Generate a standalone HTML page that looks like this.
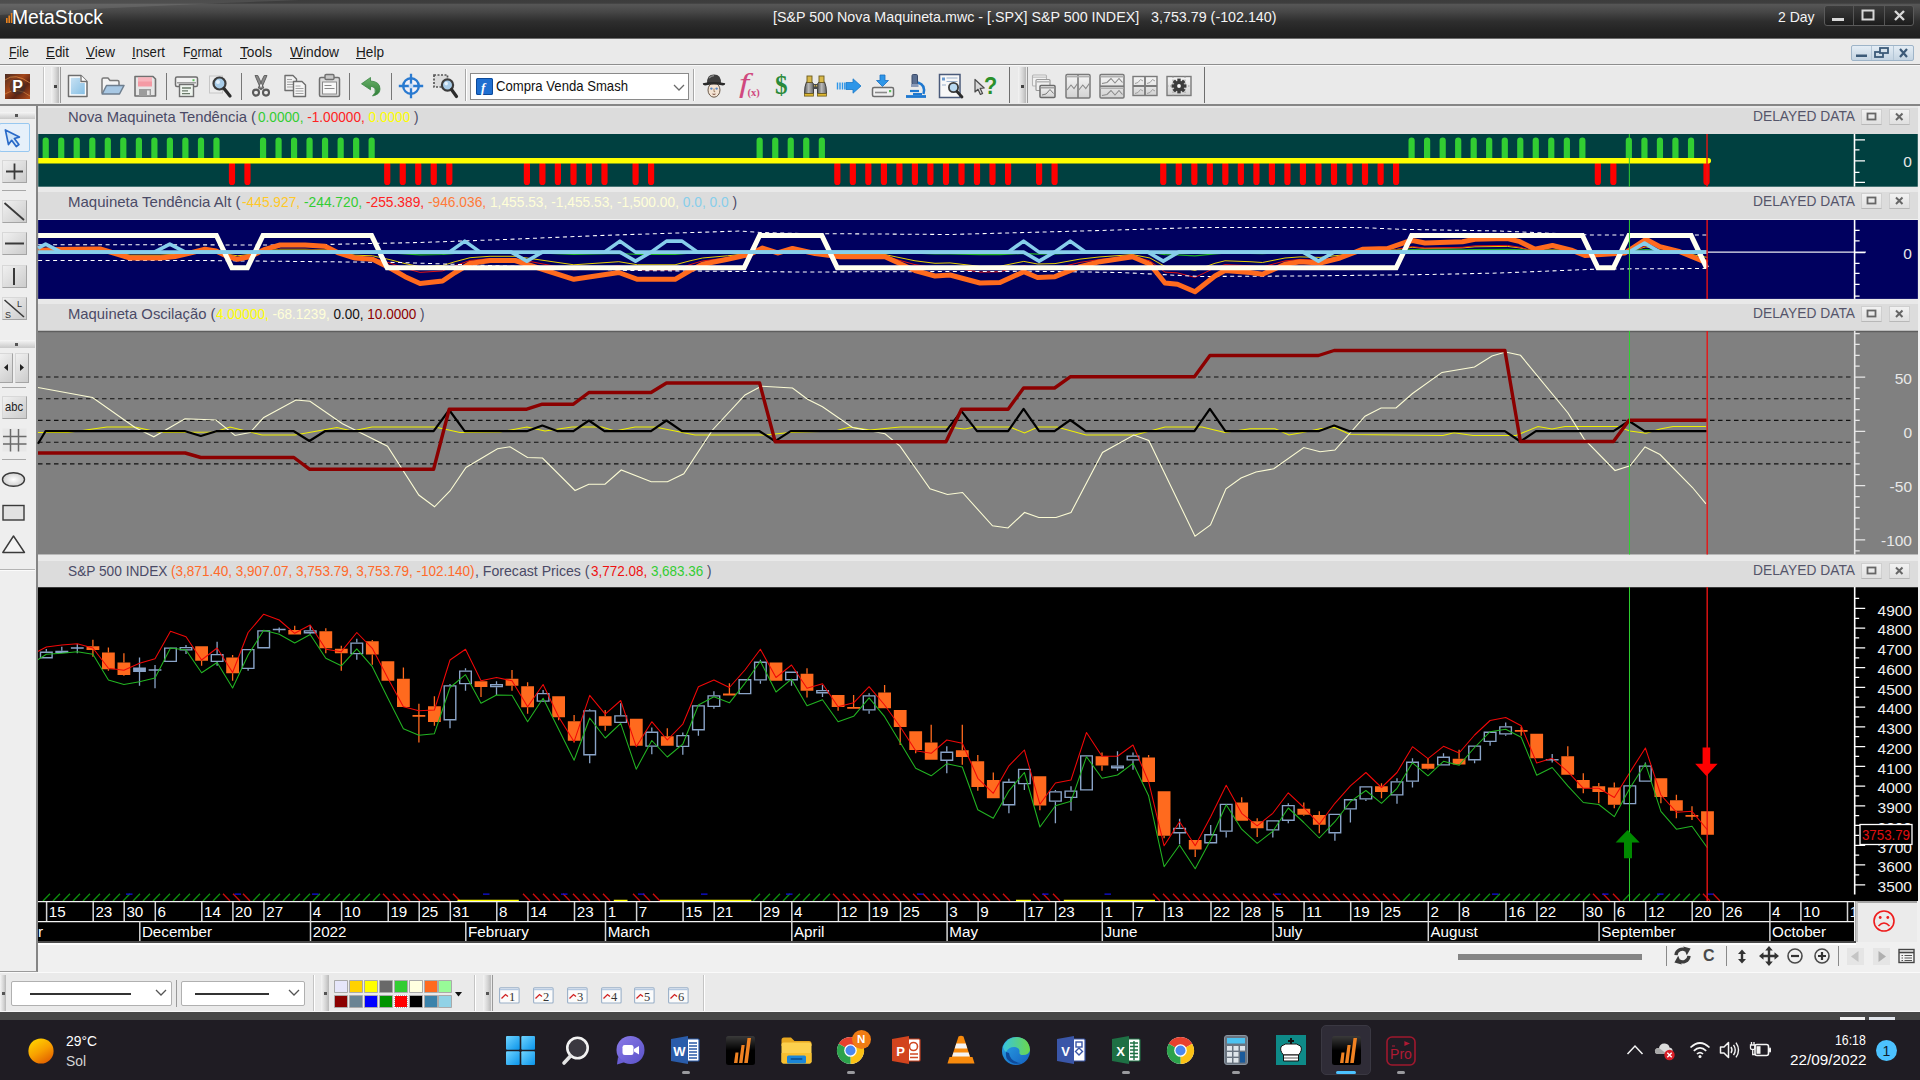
<!DOCTYPE html>
<html lang="pt"><head><meta charset="utf-8"><title>MetaStock - S&amp;P 500 Nova Maquineta</title>
<style>
html,body{margin:0;padding:0}
body{width:1920px;height:1080px;overflow:hidden;background:#f0f0f0;font-family:"Liberation Sans",sans-serif;position:relative}
.t{position:absolute;white-space:pre;line-height:1;transform-origin:0 50%;display:block}
.a{position:absolute}
svg{position:absolute;overflow:visible}
#titlebar{left:0;top:0;width:1920px;height:38px;background:linear-gradient(#3c3c3c 0,#3e3e3e 8%,#565656 12%,#464646 32%,#2e2e2e 56%,#242424 80%,#1f1f1f 100%)}
#menubar{left:0;top:38px;width:1920px;height:27px;background:#eaeaea;border-top:1px solid #6c6c6c;border-bottom:1px solid #8e8e8e;box-sizing:border-box}
#toolbar{left:0;top:65px;width:1920px;height:41px;background:#eaeaea;box-sizing:border-box;border-top:1px solid #f8f8f8;border-bottom:2px solid #868686}
#lefttools{left:0;top:106px;width:35.6px;height:865px;background:#eeeeee;border-right:2px solid #858585;border-bottom:1px solid #9a9a9a}
.phead{left:38px;width:1880px;background:#dcdcdc;box-sizing:border-box;border-top:6px solid #e9e9e9}
.btn3{position:absolute;box-sizing:border-box;background:linear-gradient(135deg,#f0f0f0,#cccccc);border:1px solid #d8d8d8;border-right-color:#a4a4a4;border-bottom-color:#a4a4a4}
.hb{position:absolute;box-sizing:border-box;width:21px;height:16px;background:linear-gradient(#f2f2f2,#e0e0e0);border:1px solid #cfcfcf;border-bottom-color:#b8b8b8}
.sep{position:absolute;width:1px;background:#a8a8a8;border-right:1px solid #fff}
.grip{position:absolute;width:8px;background:linear-gradient(90deg,#f4f4f4,#d4d4d4 60%,#b8b8b8)}
#taskbar{left:0;top:1020px;width:1920px;height:60px;background:#1f1c23}
#bottombar{left:0;top:972px;width:1920px;height:40.3px;background:#eaeaea;border-top:1px solid #fafafa;border-bottom:1px solid #f6f6f6;box-sizing:border-box}
.combo{position:absolute;box-sizing:border-box;background:#fff;border:1px solid #8a8a8a}
</style></head>
<body>
<div id="titlebar" class="a"><svg style="left:0;top:0" width="400" height="38"><path d="M0,0 H300 C200,4 90,8 0,15 Z" fill="#fff" opacity="0.09"/></svg><svg style="left:5px;top:10px" width="8" height="14"><rect x="1" y="8" width="1.6" height="5" fill="#e8821e"/><rect x="3.4" y="5.5" width="1.6" height="7.5" fill="#e8821e"/><rect x="5.8" y="3" width="1.6" height="10" fill="#e8821e"/></svg><span class="t" style="left:12.0px;top:6.9px;font-size:20px;color:#fff;transform:scaleX(0.9632);">MetaStock</span><span class="t" style="left:772.5px;top:9.3px;font-size:15px;color:#f4f4f4;transform:scaleX(0.9520);">[S&amp;P 500 Nova Maquineta.mwc - [.SPX] S&amp;P 500 INDEX]   3,753.79 (-102.140)</span><span class="t" style="left:1777.5px;top:9.3px;font-size:15px;color:#f4f4f4;transform:scaleX(0.9315);">2 Day</span><div class="a" style="left:1824px;top:5px;width:90px;height:21px;box-sizing:border-box;border:1px solid #5a5a5a;border-radius:3px;background:linear-gradient(#3c3c3c,#1c1c1c)"></div><div class="a" style="left:1853px;top:6px;width:1px;height:19px;background:#555"></div><div class="a" style="left:1884px;top:6px;width:1px;height:19px;background:#555"></div><svg style="left:1824px;top:5px" width="90" height="21"><rect x="8" y="13" width="12" height="3" fill="#d8d8d8"/><rect x="38.5" y="5.5" width="11" height="9" fill="none" stroke="#d8d8d8" stroke-width="2"/><path d="M71,6 l9,9 M80,6 l-9,9" stroke="#d8d8d8" stroke-width="2.4"/></svg></div>
<div id="menubar" class="a"><span class="t" style="left:9px;top:4.5px;font-size:15px;color:#1a1a1a;transform:scaleX(0.8275)"><u>F</u>ile</span><span class="t" style="left:46px;top:4.5px;font-size:15px;color:#1a1a1a;transform:scaleX(0.8899)"><u>E</u>dit</span><span class="t" style="left:86px;top:4.5px;font-size:15px;color:#1a1a1a;transform:scaleX(0.8995)"><u>V</u>iew</span><span class="t" style="left:132px;top:4.5px;font-size:15px;color:#1a1a1a;transform:scaleX(0.8797)"><u>I</u>nsert</span><span class="t" style="left:183px;top:4.5px;font-size:15px;color:#1a1a1a;transform:scaleX(0.8210)">F<u>o</u>rmat</span><span class="t" style="left:240px;top:4.5px;font-size:15px;color:#1a1a1a;transform:scaleX(0.9139)"><u>T</u>ools</span><span class="t" style="left:290px;top:4.5px;font-size:15px;color:#1a1a1a;transform:scaleX(0.9185)"><u>W</u>indow</span><span class="t" style="left:356px;top:4.5px;font-size:15px;color:#1a1a1a;transform:scaleX(0.9077)"><u>H</u>elp</span><div class="a" style="left:1851px;top:5.5px;width:63px;height:16px;box-sizing:border-box;border:1px solid #9eb4c8;border-radius:2px;background:linear-gradient(#e4edf5,#c4d4e2)"></div><svg style="left:1851px;top:5.5px" width="63" height="16"><rect x="5" y="9.5" width="11" height="2.5" fill="#3c5a78"/><rect x="24" y="7" width="8" height="5" fill="none" stroke="#3c5a78" stroke-width="1.8"/><rect x="29" y="3" width="8" height="5" fill="#d4e0ea" stroke="#3c5a78" stroke-width="1.8"/><path d="M49,4 l7,8 M56,4 l-7,8" stroke="#3c5a78" stroke-width="2.2"/><path d="M20.5,1 v14 M42.5,1 v14" stroke="#b4c6d6" stroke-width="1"/></svg></div>
<div id="toolbar" class="a"></div>
<svg style="left:5px;top:73.5px" width="25" height="25" viewBox="0 0 25 25" ><defs><linearGradient id="pg" x1="0" y1="0" x2="1" y2="1"><stop offset="0" stop-color="#4a2c22"/><stop offset="0.4" stop-color="#a4461a"/><stop offset="0.65" stop-color="#5c2414"/><stop offset="1" stop-color="#b8501c"/></linearGradient></defs><rect width="25" height="25" fill="url(#pg)"/><path d="M0,6 Q10,-2 25,9" stroke="#f0a050" stroke-width="1" fill="none" opacity="0.6"/><path d="M0,20 Q12,12 25,22" stroke="#f0a050" stroke-width="1" fill="none" opacity="0.5"/><circle cx="12.5" cy="12.5" r="8" fill="#3a3030" opacity="0.55"/><text x="12.5" y="18.2" font-size="16" font-weight="bold" fill="#fff" text-anchor="middle" font-family="Liberation Sans, sans-serif">P</text></svg><div class="sep" style="left:43px;top:67px;height:36px;background:#c4c4c4"></div><div class="grip" style="left:51px;top:67px;height:36px"></div><div class="a" style="left:60px;top:67px;width:1px;height:36px;background:#9a9a9a"></div><div class="a" style="left:54px;top:85px;width:3px;height:3px;background:#444"></div><svg style="left:66px;top:74px" width="24" height="24" viewBox="0 0 24 24" ><defs><linearGradient id="nb" x1="0" y1="0" x2="1" y2="1"><stop offset="0" stop-color="#c8e2f4"/><stop offset="1" stop-color="#86bfe4"/></linearGradient></defs><path d="M2.5,1.5 H15 L21,7.5 V22.5 H2.5z" fill="#fff" stroke="#6e6e6e" stroke-width="1.5" stroke-linejoin="round"/><path d="M4.8,3.8 H14 L14,9 H18.8 V20.2 H4.8z" fill="url(#nb)"/><path d="M15,1.5 V7.5 H21" fill="#fff" stroke="#6e6e6e" stroke-width="1.3"/></svg><svg style="left:100px;top:74px" width="26" height="24" viewBox="0 0 26 24" ><path d="M2,19.5 V5.5 Q2,4 3.5,4 H8 L10,6.5 H17.5 Q19,6.5 19,8 V11" fill="#f4f4f4" stroke="#7a7a7a" stroke-width="1.5" stroke-linejoin="round"/><path d="M2.2,20 L6.5,11.5 H24 L19.5,20z" fill="#a8c8e4" stroke="#6e7e8e" stroke-width="1.5" stroke-linejoin="round"/></svg><svg style="left:133px;top:74px" width="24" height="24" viewBox="0 0 24 24" ><path d="M2,2.5 H20 L22.5,5 V22 H2z" fill="#e6e6e6" stroke="#707070" stroke-width="1.6" stroke-linejoin="round"/><rect x="5" y="3.5" width="14" height="9" fill="#f49aa4"/><rect x="5" y="3.5" width="14" height="4" fill="#f8b4bc"/><rect x="6" y="15" width="12" height="7" fill="#9c9c9c"/><rect x="14" y="16.5" width="2.6" height="4.5" fill="#e8e8e8"/></svg><div class="a" style="left:165.5px;top:72.5px;width:1px;height:27px;background:#777"></div><svg style="left:174px;top:74px" width="25" height="24" viewBox="0 0 25 24" ><rect x="1.5" y="3" width="22" height="9.5" rx="1.5" fill="#f2f2f2" stroke="#6e6e6e" stroke-width="1.5"/><rect x="18.5" y="5.2" width="2" height="2" fill="#5cc05c"/><path d="M3,8.8 H22" stroke="#8a8a8a" stroke-width="1.2"/><rect x="5.5" y="10.5" width="14" height="12" fill="#eef4ee" stroke="#6e6e6e" stroke-width="1.4"/><path d="M8,14 H17 M8,16.8 H14 M8,19.6 H16" stroke="#6a7a6a" stroke-width="1.3"/></svg><svg style="left:207px;top:73px" width="26" height="26" viewBox="0 0 26 26" ><rect x="2.5" y="3" width="13" height="17" fill="#ececec" stroke="#c6c6c6" stroke-width="1"/><circle cx="12.5" cy="10.5" r="6" fill="#a8cce8" stroke="#3c3c3c" stroke-width="2.2"/><circle cx="11" cy="9" r="2" fill="#e4f0fa"/><path d="M17,15.5 L23,23" stroke="#2c2c2c" stroke-width="3.2" stroke-linecap="round"/></svg><div class="a" style="left:240.5px;top:72.5px;width:1px;height:27px;background:#777"></div><svg style="left:250px;top:74px" width="22" height="24" viewBox="0 0 22 24" ><path d="M5,1.5 L7.8,1.5 L13.8,14 L11,15.5z M17,1.5 L14.2,1.5 L8.2,14 L11,15.5z" fill="#8a8a8a" stroke="#5a5a5a" stroke-width="0.9" stroke-linejoin="round"/><circle cx="6" cy="18.6" r="3" fill="none" stroke="#5a5a5a" stroke-width="2.1"/><circle cx="16" cy="18.6" r="3" fill="none" stroke="#5a5a5a" stroke-width="2.1"/></svg><svg style="left:283px;top:74px" width="24" height="24" viewBox="0 0 24 24" ><path d="M2,1.5 H10 L13.5,5 V16.5 H2z" fill="#f2f2f2" stroke="#6e6e6e" stroke-width="1.4" stroke-linejoin="round"/><path d="M4,5.5 h5 M4,8 h7 M4,10.5 h7 M4,13 h7" stroke="#a4a4a4" stroke-width="1"/><path d="M10.5,7.5 H19 L22.5,11 V22.5 H10.5z" fill="#f6f6f6" stroke="#6e6e6e" stroke-width="1.4" stroke-linejoin="round"/><path d="M12.5,12 h5 M12.5,14.5 h8 M12.5,17 h8 M12.5,19.5 h8" stroke="#a4a4a4" stroke-width="1"/></svg><svg style="left:318px;top:73px" width="23" height="25" viewBox="0 0 23 25" ><rect x="1.5" y="4.5" width="20" height="19" rx="1.5" fill="#dcdcdc" stroke="#707070" stroke-width="1.5"/><rect x="7" y="1.5" width="9" height="5" rx="1.2" fill="#c8c8c8" stroke="#707070" stroke-width="1.4"/><rect x="4.5" y="9" width="14" height="12" fill="#f8f8f8" stroke="#8a8a8a" stroke-width="1"/><path d="M6.5,12.5 h7 M6.5,15.5 h10" stroke="#8a8a8a" stroke-width="1.2"/></svg><div class="a" style="left:349px;top:72.5px;width:1px;height:27px;background:#777"></div><svg style="left:360px;top:75px" width="22" height="22" viewBox="0 0 22 22" ><defs><linearGradient id="ug" x1="0" y1="0" x2="0" y2="1"><stop offset="0" stop-color="#6ab06a"/><stop offset="1" stop-color="#2e7e36"/></linearGradient></defs><path d="M1.5,8.8 L10.5,2.5 V6 Q20,6.5 20,14 Q20,19.5 12.5,21 Q16.5,17.5 15,13.8 Q13.5,11.2 10.5,11.4 V14.8z" fill="url(#ug)" stroke="#3a8644" stroke-width="0.8" stroke-linejoin="round"/></svg><div class="a" style="left:390.5px;top:72.5px;width:1px;height:27px;background:#777"></div><svg style="left:398px;top:73px" width="26" height="26" viewBox="0 0 26 26" ><circle cx="13" cy="13" r="7.8" fill="#f4f0f6" stroke="#2a7ad0" stroke-width="2.4"/><path d="M13,0.8 V25.2 M0.8,13 H25.2" stroke="#2a7ad0" stroke-width="2.3"/><circle cx="13" cy="13" r="2.4" fill="#d8e6f8" opacity="0.9"/></svg><svg style="left:432px;top:73px" width="26" height="26" viewBox="0 0 26 26" ><rect x="2" y="2" width="13.5" height="12" fill="#dcdcdc" stroke="#555" stroke-width="1.7" stroke-dasharray="2 1.5"/><circle cx="15.5" cy="12" r="5.6" fill="#a8cce8" stroke="#3c3c3c" stroke-width="2.2"/><circle cx="14.2" cy="10.6" r="1.8" fill="#e4f0fa"/><path d="M19.5,16.5 L24.5,23.5" stroke="#2c2c2c" stroke-width="3.2" stroke-linecap="round"/></svg><div class="sep" style="left:465px;top:69px;height:32px"></div><div class="sep" style="left:693px;top:69px;height:32px"></div><svg style="left:702px;top:73px" width="24" height="26" viewBox="0 0 24 26" ><ellipse cx="12" cy="17" rx="6" ry="7.2" fill="#f4e4d4" stroke="#6a5a4a" stroke-width="1"/><path d="M5,10.8 Q4.5,1.5 12,1.5 Q19.5,1.5 19,10.8z" fill="#3e3e3e"/><path d="M7,5 Q9,2.8 12,2.6" stroke="#8a8a8a" stroke-width="1.3" fill="none"/><path d="M0.8,10.2 Q12,8 23.2,10.2 Q23.6,12 21,12.6 Q12,10.6 3,12.6 Q0.4,12 0.8,10.2z" fill="#2a2a2a"/><circle cx="9.4" cy="15.6" r="1.2" fill="#5a8ac8"/><circle cx="14.6" cy="15.6" r="1.2" fill="#5a8ac8"/><path d="M12,15.5 v3.2 h1.2" stroke="#8a6a4a" stroke-width="0.8" fill="none"/><path d="M10.5,21 q1.5,0.8 3,0" stroke="#6a3a2a" stroke-width="0.9" fill="none"/></svg><span class="t" style="left:738.5px;top:69.5px;font-size:27px;color:#d0487e;font-family:'Liberation Serif',serif;font-style:italic;transform:scaleX(1.35)">f</span><span class="t" style="left:747.5px;top:87.5px;font-size:10.5px;font-weight:bold;color:#d0487e;font-family:'Liberation Serif',serif">(x)</span><span class="t" style="left:774.5px;top:71px;font-size:28px;color:#2a8a3a;font-family:'Liberation Serif',serif;font-weight:bold;transform:scaleX(0.9)">$</span><svg style="left:803px;top:74px" width="25" height="24" viewBox="0 0 25 24" ><defs><linearGradient id="bn" x1="0" y1="0" x2="1" y2="0"><stop offset="0" stop-color="#5a5a5a"/><stop offset="0.45" stop-color="#b8b8b8"/><stop offset="1" stop-color="#6a6a6a"/></linearGradient></defs><path d="M3.5,8 Q1.5,12 1.5,19.5 H10.5 V10 L9,8z" fill="url(#bn)" stroke="#3e3e3e" stroke-width="1"/><path d="M21.5,8 Q23.5,12 23.5,19.5 H14.5 V10 L16,8z" fill="url(#bn)" stroke="#3e3e3e" stroke-width="1"/><rect x="4" y="2" width="5" height="6.5" fill="#d8b848" stroke="#6a5a20" stroke-width="0.9"/><rect x="16" y="2" width="5" height="6.5" fill="#d8b848" stroke="#6a5a20" stroke-width="0.9"/><rect x="9.8" y="10" width="5.4" height="5" fill="#4a4a4a"/><rect x="11" y="11.2" width="1.2" height="1.2" fill="#e8c850"/><rect x="13" y="11.2" width="1.2" height="1.2" fill="#e8c850"/><rect x="1.5" y="19.5" width="9" height="2.6" fill="#e0b830" stroke="#6a5a20" stroke-width="0.8"/><rect x="14.5" y="19.5" width="9" height="2.6" fill="#e0b830" stroke="#6a5a20" stroke-width="0.8"/></svg><svg style="left:836px;top:78px" width="26" height="16" viewBox="0 0 26 16" ><path d="M10,4.5 H17 V0.8 L25,8 L17,15.2 V11.5 H10z" fill="#2e96e8" stroke="#1a78c8" stroke-width="0.8"/><path d="M1.5,4.5 V11.5 M4,4.5 V11.5 M6.5,4.5 V11.5 M8.8,4.5 V11.5" stroke="#2e96e8" stroke-width="1.4"/></svg><svg style="left:871px;top:74px" width="24" height="25" viewBox="0 0 24 25" ><path d="M9,1 h5 v5.5 h3.5 l-6,6 l-6,-6 h3.5z" fill="#2e96e8" stroke="#1a70c0" stroke-width="0.8"/><rect x="1.5" y="13.5" width="21" height="9" rx="1.5" fill="#f0f0f0" stroke="#6e6e6e" stroke-width="1.5"/><path d="M4,18.5 h12" stroke="#8a8a8a" stroke-width="1.6"/><rect x="18" y="16" width="2.2" height="2.2" fill="#5cc05c"/></svg><svg style="left:904px;top:73px" width="24" height="26" viewBox="0 0 24 26" ><rect x="8" y="1.5" width="5.5" height="10" rx="1.2" fill="#5a6e90" stroke="#3a4a6a" stroke-width="1"/><rect x="7" y="11" width="7.5" height="3" fill="#8a9ab8"/><path d="M14,9.5 Q22,12 19.5,21" fill="none" stroke="#1e78d0" stroke-width="2.4"/><path d="M6,18 h9" stroke="#1e78d0" stroke-width="2.2"/><path d="M2,23.5 H22" stroke="#1e78d0" stroke-width="2.8"/><path d="M9,21 h9" stroke="#1e78d0" stroke-width="2"/></svg><svg style="left:938px;top:73px" width="26" height="26" viewBox="0 0 26 26" ><rect x="1.5" y="1.5" width="20.5" height="23" fill="#f8f8f8" stroke="#4a5a7a" stroke-width="1.5"/><rect x="4" y="4.5" width="3" height="3" fill="#6a9ad0"/><path d="M8.5,5 h11 M8.5,8.5 h11 M4,12 h4" stroke="#9ab0cc" stroke-width="1.1"/><circle cx="15.5" cy="14.5" r="4.6" fill="#b8d8f0" stroke="#3c3c3c" stroke-width="1.8"/><path d="M19,18.5 L24,24" stroke="#2c2c2c" stroke-width="2.8" stroke-linecap="round"/></svg><svg style="left:973px;top:75px" width="26" height="22" viewBox="0 0 26 22" ><path d="M2,4.5 L2,17 L5,14.3 L7.4,19.5 L9.6,18.4 L7.2,13.4 L11.2,13z" fill="#d8d8d8" stroke="#4a4a4a" stroke-width="1.2" stroke-linejoin="round"/></svg><span class="t" style="left:984px;top:74px;font-size:24px;color:#2a902a;font-weight:bold;transform:scaleX(0.9)">?</span><div class="a" style="left:1009px;top:67px;width:1px;height:36px;background:#6e6e6e"></div><div class="grip" style="left:1018px;top:67px;height:36px"></div><div class="a" style="left:1027px;top:67px;width:1px;height:36px;background:#9a9a9a"></div><div class="a" style="left:1021px;top:85px;width:3px;height:3px;background:#444"></div><svg style="left:1031px;top:73px" width="26" height="26" viewBox="0 0 26 26" ><defs><linearGradient id="cg" x1="0" y1="0" x2="0" y2="1"><stop offset="0" stop-color="#f6f6f6"/><stop offset="1" stop-color="#d2d2d2"/></linearGradient></defs><rect x="1.5" y="2" width="14" height="11" rx="1" fill="#f2f2f2" stroke="#b4b4b4" stroke-width="1.1"/><path d="M2,4.2 h13" stroke="#c8c8c8" stroke-width="1.4"/><rect x="5" y="6.5" width="14" height="11" rx="1" fill="#f0f0f0" stroke="#9a9a9a" stroke-width="1.2"/><path d="M5.5,8.8 h13" stroke="#b4b4b4" stroke-width="1.4"/><rect x="9" y="12.5" width="15" height="12" rx="1" fill="url(#cg)" stroke="#6a6a6a" stroke-width="1.5"/><path d="M9.5,14.8 h14" stroke="#9a9a9a" stroke-width="1.4"/><path d="M11,22 l4,-1 l4,-4.5 l3.5,4" stroke="#7a7a7a" stroke-width="1" fill="none"/></svg><svg style="left:1065px;top:73px" width="26" height="26" viewBox="0 0 26 26" ><rect x="1" y="1.5" width="24" height="23.5" rx="1.2" fill="url(#cg)" stroke="#7a7a7a" stroke-width="1.5"/><path d="M13,1.5 V25" stroke="#7a7a7a" stroke-width="1.6"/><path d="M1.5,3.6 h23" stroke="#b0b0b0" stroke-width="1.6"/><path d="M2,17 l4,-5 l3,3.5 l3.5,-5 M13.8,17 l4,-5 l3,3.5 l3.5,-5" stroke="#8a8a8a" stroke-width="1.1" fill="none"/></svg><svg style="left:1098.5px;top:73px" width="26" height="26" viewBox="0 0 26 26" ><rect x="1" y="1.5" width="24" height="23.5" rx="1.2" fill="url(#cg)" stroke="#7a7a7a" stroke-width="1.5"/><path d="M1,13.2 H25" stroke="#7a7a7a" stroke-width="1.6"/><path d="M1.5,3.6 h23 M1.5,15.2 h23" stroke="#b0b0b0" stroke-width="1.6"/><path d="M3,10.5 l5,-1 l4,-4 l4,4.5 l4,-4.5 l3.5,4 M3,22.5 l5,-1 l4,-4 l4,4.5 l4,-4.5 l3.5,4" stroke="#8a8a8a" stroke-width="1.1" fill="none"/></svg><svg style="left:1132px;top:75px" width="26" height="22" viewBox="0 0 26 22" ><rect x="1" y="1.5" width="24" height="19" fill="url(#cg)" stroke="#7a7a7a" stroke-width="1.4"/><path d="M13,1.5 V20.5 M1,11 H25" stroke="#7a7a7a" stroke-width="1.8"/><path d="M3,8.5 l3,-1 l2.5,-3 l2.5,1.5 M15,8.5 l3,-1 l2.5,-3 l2.5,1.5 M3,18.5 l3,-1 l2.5,-3 l2.5,1.5 M15,18.5 l3,-1 l2.5,-3 l2.5,1.5" stroke="#a0a0a0" stroke-width="1" fill="none"/></svg><svg style="left:1166px;top:75px" width="26" height="22" viewBox="0 0 26 22" ><rect x="1" y="1.5" width="24" height="19" fill="url(#cg)" stroke="#7a7a7a" stroke-width="1.4"/><path d="M1,11 H25 M7,1.5 V20.5 M19,1.5 V20.5" stroke="#9a9a9a" stroke-width="1" stroke-dasharray="1.5 1.5"/><rect x="11.3" y="3.6" width="3.4" height="4" fill="#3c3c3c" transform="rotate(0 13 11)"/><rect x="11.3" y="3.6" width="3.4" height="4" fill="#3c3c3c" transform="rotate(45 13 11)"/><rect x="11.3" y="3.6" width="3.4" height="4" fill="#3c3c3c" transform="rotate(90 13 11)"/><rect x="11.3" y="3.6" width="3.4" height="4" fill="#3c3c3c" transform="rotate(135 13 11)"/><rect x="11.3" y="3.6" width="3.4" height="4" fill="#3c3c3c" transform="rotate(180 13 11)"/><rect x="11.3" y="3.6" width="3.4" height="4" fill="#3c3c3c" transform="rotate(225 13 11)"/><rect x="11.3" y="3.6" width="3.4" height="4" fill="#3c3c3c" transform="rotate(270 13 11)"/><rect x="11.3" y="3.6" width="3.4" height="4" fill="#3c3c3c" transform="rotate(315 13 11)"/><circle cx="13" cy="11" r="5.2" fill="#3c3c3c"/><circle cx="13" cy="11" r="1.9" fill="#f8f8f8"/></svg><div class="a" style="left:1204.3px;top:67px;width:1px;height:36px;background:#6e6e6e"></div><div class="combo" style="left:470px;top:73px;width:219px;height:27px"></div><svg style="left:476px;top:78px" width="17" height="17"><rect x="0" y="0" width="17" height="17" rx="1.5" fill="#1f6fd0"/><rect x="0.5" y="0.5" width="16" height="16" rx="1.5" fill="none" stroke="#0d4a9a"/></svg><span class="t" style="left:481.0px;top:80.5px;font-size:13px;color:#fff;font-weight:bold;font-style:italic;font-family:'Liberation Serif',serif;">f</span><span class="t" style="left:496.0px;top:78.3px;font-size:15px;color:#111;transform:scaleX(0.8747);">Compra Venda Smash</span><svg style="left:672.5px;top:83.5px" width="12" height="8"><path d="M1,1 L6,6 L11,1" fill="none" stroke="#6a6a6a" stroke-width="1.3"/></svg><div id="lefttools" class="a"></div>
<div class="a" style="left:0;top:112px;width:35px;height:7px;background:linear-gradient(#f6f6f6,#c8c8c8)"></div><div class="a" style="left:15px;top:114px;width:3px;height:3px;background:#555"></div><div class="a" style="left:-1px;top:123px;width:31px;height:29px;box-sizing:border-box;border:1px solid #98c8f0;border-radius:2px;background:#e6f0fa"></div><svg style="left:5px;top:127px" width="18" height="22" viewBox="0 0 18 22" ><path d="M2,1.5 L2,16.5 L6,13 L9.2,20 L12.2,18.6 L9,11.8 L14.2,11.4z" fill="#cfe4f8" stroke="#2a6ac8" stroke-width="1.7" stroke-linejoin="round" transform="rotate(-12 8 10)"/></svg><div class="btn3" style="left:2px;top:160px;width:25px;height:23px"></div><svg style="left:2px;top:160px" width="25" height="23" viewBox="0 0 25 23" ><path d="M12.5,3.5 V19.5 M4,11.5 H21" stroke="#3a3a3a" stroke-width="1.8"/></svg><div class="a" style="left:2px;top:190px;width:24px;height:1px;background:#a8a8a8"></div><div class="btn3" style="left:2px;top:200px;width:25px;height:23px"></div><svg style="left:2px;top:200px" width="25" height="23" viewBox="0 0 25 23" ><path d="M2.5,3 L22,20" stroke="#3a3a3a" stroke-width="1.8"/></svg><div class="btn3" style="left:2px;top:232px;width:25px;height:23px"></div><svg style="left:2px;top:232px" width="25" height="23" viewBox="0 0 25 23" ><path d="M3,11.5 H22" stroke="#3a3a3a" stroke-width="2"/></svg><div class="btn3" style="left:2px;top:265px;width:25px;height:23px"></div><svg style="left:2px;top:265px" width="25" height="23" viewBox="0 0 25 23" ><path d="M12,3 V20" stroke="#3a3a3a" stroke-width="2"/></svg><div class="btn3" style="left:2px;top:297px;width:25px;height:23px"></div><svg style="left:2px;top:297px" width="25" height="23" viewBox="0 0 25 23" ><path d="M2.5,3 L22,20" stroke="#3a3a3a" stroke-width="1.6"/><text x="15" y="9.5" font-size="9" fill="#333" font-family="Liberation Sans, sans-serif">L</text><text x="3" y="20.5" font-size="9" fill="#333" font-family="Liberation Sans, sans-serif">S</text></svg><div class="a" style="left:0;top:340px;width:35px;height:8px;background:linear-gradient(#f6f6f6,#c8c8c8)"></div><div class="a" style="left:15px;top:342.5px;width:3px;height:3px;background:#555"></div><div class="btn3" style="left:-1px;top:353px;width:14px;height:30px"></div><div class="btn3" style="left:15px;top:353px;width:14px;height:30px"></div><svg style="left:0px;top:353px" width="30" height="30" viewBox="0 0 30 30" ><path d="M8,11 L4,14.5 L8,18z M20,11 L24,14.5 L20,18z" fill="#222"/></svg><div class="a" style="left:2px;top:387px;width:24px;height:1px;background:#a8a8a8"></div><div class="btn3" style="left:2px;top:396px;width:25px;height:23px"></div><span class="t" style="left:4.5px;top:400px;font-size:13px;color:#222;transform:scaleX(0.86)">abc</span><svg style="left:2px;top:428px" width="25" height="24" viewBox="0 0 25 24" ><rect x="0.5" y="0.5" width="24" height="23" fill="#e8e8e8"/><path d="M8.5,1 V23.5 M16.5,1 V23.5 M1,8.5 H24.5 M1,16 H24.5" stroke="#6a6a6a" stroke-width="1.5"/></svg><div class="a" style="left:2px;top:459px;width:24px;height:1px;background:#a8a8a8"></div><svg style="left:1px;top:470px" width="27" height="20" viewBox="0 0 27 20" ><defs><radialGradient id="eg"><stop offset="0" stop-color="#fff"/><stop offset="1" stop-color="#d0d0d0"/></radialGradient></defs><ellipse cx="12.5" cy="9.5" rx="11" ry="6.8" fill="url(#eg)" stroke="#3a3a3a" stroke-width="1.4"/></svg><svg style="left:1px;top:503px" width="27" height="20" viewBox="0 0 27 20" ><rect x="2" y="2.5" width="21" height="14.5" fill="#e2e2e2" stroke="#3a3a3a" stroke-width="1.4"/></svg><svg style="left:1px;top:533px" width="27" height="22" viewBox="0 0 27 22" ><path d="M12.5,3 L23.5,19.5 H1.8z" fill="#f4f4f4" stroke="#3a3a3a" stroke-width="1.4" stroke-linejoin="round"/></svg><div class="a" style="left:0;top:569px;width:35px;height:1px;background:#b4b4b4"></div><div class="a" style="left:0;top:570px;width:35px;height:1px;background:#fbfbfb"></div><div class="a phead" style="top:106px;height:27.5px;border-top-width:2px"></div><span class="t" style="left:68.0px;top:109.3px;font-size:15px;transform:scaleX(0.9860);"><span style="color:#4a4a66">Nova Maquineta Tendência (</span></span><span class="t" style="left:257.5px;top:109.3px;font-size:15px;transform:scaleX(0.9079);"><span style="color:#32cd32">0.0000,</span><span style="color:#ff2222"> -1.00000,</span><span style="color:#ffff00"> 0.0000</span><span style="color:#4a4a66"> )</span></span><span class="t" style="left:1753.0px;top:109.3px;font-size:14px;color:#55556a;transform:scaleX(0.9858);">DELAYED DATA</span><div class="hb" style="left:1861px;top:108.5px"></div><div class="hb" style="left:1889px;top:108.5px"></div><svg style="left:1861px;top:108.5px" width="50" height="16"><rect x="6.5" y="4.5" width="8" height="6" fill="none" stroke="#666" stroke-width="1.8"/><path d="M35,4.5 l6.5,6.5 M41.5,4.5 l-6.5,6.5" stroke="#666" stroke-width="2"/></svg><div class="a phead" style="top:186.2px;height:33.30000000000001px;border-top-width:6px"></div><span class="t" style="left:68.0px;top:194.1px;font-size:15px;transform:scaleX(1.0010);"><span style="color:#4a4a66">Maquineta Tendência Alt (</span></span><span class="t" style="left:242.0px;top:194.1px;font-size:15px;transform:scaleX(0.9175);"><span style="color:#ffc828">-445.927,</span><span style="color:#32cd32"> -244.720,</span><span style="color:#ff2222"> -255.389,</span><span style="color:#ff7a38"> -946.036,</span><span style="color:#ffffd8"> 1,455.53,</span><span style="color:#ffffd8"> -1,455.53,</span><span style="color:#ffffd8"> -1,500.00,</span><span style="color:#87ceeb"> 0.0,</span><span style="color:#87ceeb"> 0.0</span><span style="color:#4a4a66"> )</span></span><span class="t" style="left:1753.0px;top:194.1px;font-size:14px;color:#55556a;transform:scaleX(0.9858);">DELAYED DATA</span><div class="hb" style="left:1861px;top:193.3px"></div><div class="hb" style="left:1889px;top:193.3px"></div><svg style="left:1861px;top:193.3px" width="50" height="16"><rect x="6.5" y="4.5" width="8" height="6" fill="none" stroke="#666" stroke-width="1.8"/><path d="M35,4.5 l6.5,6.5 M41.5,4.5 l-6.5,6.5" stroke="#666" stroke-width="2"/></svg><div class="a phead" style="top:298.4px;height:32.60000000000002px;border-top-width:6px"></div><span class="t" style="left:68.0px;top:306.4px;font-size:15px;transform:scaleX(0.9884);"><span style="color:#4a4a66">Maquineta Oscilação (</span></span><span class="t" style="left:215.8px;top:306.4px;font-size:15px;transform:scaleX(0.9026);"><span style="color:#ffff00">4.00000,</span><span style="color:#ffffd8"> -68.1239,</span><span style="color:#111"> 0.00,</span><span style="color:#8b0000"> 10.0000</span><span style="color:#4a4a66"> )</span></span><span class="t" style="left:1753.0px;top:306.4px;font-size:14px;color:#55556a;transform:scaleX(0.9858);">DELAYED DATA</span><div class="hb" style="left:1861px;top:305.6px"></div><div class="hb" style="left:1889px;top:305.6px"></div><svg style="left:1861px;top:305.6px" width="50" height="16"><rect x="6.5" y="4.5" width="8" height="6" fill="none" stroke="#666" stroke-width="1.8"/><path d="M35,4.5 l6.5,6.5 M41.5,4.5 l-6.5,6.5" stroke="#666" stroke-width="2"/></svg><div class="a phead" style="top:554.5px;height:32.5px;border-top-width:6px"></div><span class="t" style="left:68.0px;top:563.3px;font-size:15px;transform:scaleX(0.9133);"><span style="color:#4a4a66">S&amp;P 500 INDEX</span></span><span class="t" style="left:171.0px;top:563.3px;font-size:15px;transform:scaleX(0.9031);"><span style="color:#ff6a2a">(3,871.40, 3,907.07, 3,753.79, 3,753.79, -102.140)</span></span><span class="t" style="left:474.5px;top:563.3px;font-size:15px;transform:scaleX(0.9410);"><span style="color:#4a4a66">, Forecast Prices (</span></span><span class="t" style="left:590.5px;top:563.3px;font-size:15px;transform:scaleX(0.8975);"><span style="color:#ee1111">3,772.08,</span><span style="color:#32cd32"> 3,683.36</span><span style="color:#4a4a66"> )</span></span><span class="t" style="left:1753.0px;top:563.3px;font-size:14px;color:#55556a;transform:scaleX(0.9858);">DELAYED DATA</span><div class="hb" style="left:1861px;top:562.5px"></div><div class="hb" style="left:1889px;top:562.5px"></div><svg style="left:1861px;top:562.5px" width="50" height="16"><rect x="6.5" y="4.5" width="8" height="6" fill="none" stroke="#666" stroke-width="1.8"/><path d="M35,4.5 l6.5,6.5 M41.5,4.5 l-6.5,6.5" stroke="#666" stroke-width="2"/></svg>
<svg style="left:38px;top:133.5px" width="1880" height="52.7" viewBox="38 133.5 1880 52.7"><rect x="38" y="133.5" width="1880" height="52.7" fill="#004040"/><path d="M45.5,140 V158M61.0,140 V158M76.5,140 V158M92.1,140 V158M107.6,140 V158M123.1,140 V158M138.7,140 V158M154.2,140 V158M169.7,140 V158M185.2,140 V158M200.8,140 V158M216.3,140 V158M262.9,140 V158M278.4,140 V158M293.9,140 V158M309.4,140 V158M324.9,140 V158M340.5,140 V158M356.0,140 V158M371.5,140 V158M759.6,140 V158M775.2,140 V158M790.7,140 V158M806.2,140 V158M821.8,140 V158M1411.7,140 V158M1427.2,140 V158M1442.8,140 V158M1458.3,140 V158M1473.8,140 V158M1489.3,140 V158M1504.9,140 V158M1520.4,140 V158M1535.9,140 V158M1551.4,140 V158M1567.0,140 V158M1582.5,140 V158M1629.0,140 V158M1644.6,140 V158M1660.1,140 V158M1675.6,140 V158M1691.2,140 V158" stroke="#32cd32" stroke-width="6.2" stroke-linecap="round" fill="none"/><path d="M231.8,164 V181.4M247.3,164 V181.4M387.1,164 V181.4M402.6,164 V181.4M418.1,164 V181.4M433.6,164 V181.4M449.2,164 V181.4M526.8,164 V181.4M542.3,164 V181.4M557.8,164 V181.4M573.4,164 V181.4M588.9,164 V181.4M604.4,164 V181.4M635.5,164 V181.4M651.0,164 V181.4M837.3,164 V181.4M852.8,164 V181.4M868.3,164 V181.4M883.9,164 V181.4M899.4,164 V181.4M914.9,164 V181.4M930.4,164 V181.4M946.0,164 V181.4M961.5,164 V181.4M977.0,164 V181.4M992.5,164 V181.4M1008.1,164 V181.4M1039.1,164 V181.4M1054.6,164 V181.4M1163.3,164 V181.4M1178.8,164 V181.4M1194.4,164 V181.4M1209.9,164 V181.4M1225.4,164 V181.4M1240.9,164 V181.4M1256.5,164 V181.4M1272.0,164 V181.4M1287.5,164 V181.4M1303.0,164 V181.4M1318.5,164 V181.4M1334.1,164 V181.4M1349.6,164 V181.4M1365.1,164 V181.4M1380.7,164 V181.4M1396.2,164 V181.4M1598.0,164 V181.4M1613.5,164 V181.4M1706.7,164 V181.4" stroke="#ff0000" stroke-width="6.2" stroke-linecap="round" fill="none"/><path d="M38,160.3 H1708.5" stroke="#ffff00" stroke-width="5.4"/><circle cx="1708.5" cy="160.3" r="2.7" fill="#ffff00"/><path d="M1629.5,133.5 V186.2" stroke="#2fd02f" stroke-width="1"/><path d="M1707.2,133.5 V186.2" stroke="#e81414" stroke-width="1.4"/><path d="M1854.7,133.5 V186.2" stroke="#fff" stroke-width="1.6"/><path d="M1854.7,139.5 h10.5M1854.7,160.4 h10.5M1854.7,181.8 h10.5M1854.7,149.3 h5M1854.7,171.8 h5" stroke="#fff" stroke-width="1.25" fill="none"/><text x="1912" y="166.5" font-size="15.5" fill="#e8e8e8" text-anchor="end" font-family="Liberation Sans, sans-serif">0</text></svg>
<svg style="left:38px;top:219.5px" width="1880" height="78.9" viewBox="38 219.5 1880 78.9"><rect x="38" y="219.5" width="1880" height="78.9" fill="#00005f"/><polyline points="38.0,251.3 55.0,250.9 100.0,250.7 130.0,254.7 160.0,254.7 175.0,254.0 190.0,252.4 205.0,250.8 216.0,251.6 227.5,254.0 237.5,255.3 250.0,254.0 265.0,250.8 280.0,248.8 305.0,248.8 325.0,249.4 337.5,252.2 355.0,254.7 372.5,255.3 390.0,259.2 405.0,263.1 420.0,266.2 442.5,265.1 455.0,261.2 470.0,257.2 490.0,255.8 515.0,255.8 573.8,264.3 618.8,261.2 637.5,264.3 675.0,264.3 690.0,260.3 702.5,257.5 727.5,255.3 750.0,253.0 762.5,250.2 777.5,252.4 792.5,250.4 815.0,252.7 840.0,254.1 885.0,254.1 915.0,260.3 935.0,262.8 950.0,262.4 980.0,265.9 1000.0,265.7 1023.8,260.9 1037.5,263.5 1055.0,263.1 1080.0,258.6 1100.0,256.4 1132.5,254.1 1150.0,257.5 1165.0,265.9 1177.5,266.5 1195.0,269.9 1215.0,262.8 1225.0,260.3 1250.0,261.2 1262.5,262.0 1285.0,257.5 1300.0,256.4 1320.0,256.9 1340.0,254.7 1362.5,250.8 1387.5,250.4 1407.5,247.4 1412.5,246.8 1425.0,247.9 1462.5,247.4 1475.0,246.3 1507.5,245.9 1520.0,247.4 1535.0,250.8 1552.5,249.1 1572.5,251.3 1585.0,253.6 1625.0,252.4 1646.0,246.3 1660.0,249.6 1680.0,251.9 1707.5,256.9" fill="none" stroke="#e8d000" stroke-width="1"/><polyline points="38.0,252.1 55.0,251.5 100.0,251.2 130.0,256.6 160.0,256.6 175.0,255.7 190.0,253.6 205.0,251.3 216.0,252.4 227.5,255.7 237.5,257.4 250.0,255.7 265.0,251.3 280.0,248.8 305.0,248.8 325.0,249.6 337.5,253.3 355.0,256.6 372.5,257.4 390.0,262.6 405.0,267.9 420.0,271.9 442.5,270.4 455.0,265.3 470.0,259.9 490.0,258.1 515.0,258.1 573.8,269.4 618.8,265.3 637.5,269.4 675.0,269.4 690.0,264.1 702.5,260.4 727.5,257.4 750.0,254.3 762.5,250.6 777.5,253.6 792.5,250.9 815.0,253.9 840.0,255.8 885.0,255.8 915.0,264.1 935.0,267.4 950.0,266.8 980.0,271.6 1000.0,271.3 1023.8,264.9 1037.5,268.3 1055.0,267.9 1080.0,261.9 1100.0,258.9 1132.5,255.8 1150.0,260.4 1165.0,271.6 1177.5,272.4 1195.0,276.9 1215.0,267.4 1225.0,264.1 1250.0,265.3 1262.5,266.4 1285.0,260.4 1300.0,258.9 1320.0,259.6 1340.0,256.6 1362.5,251.3 1387.5,250.9 1407.5,246.8 1412.5,246.1 1425.0,247.6 1462.5,246.8 1475.0,245.3 1507.5,244.9 1520.0,246.8 1535.0,251.3 1552.5,249.1 1572.5,252.1 1585.0,255.1 1625.0,253.6 1646.0,245.3 1660.0,249.8 1680.0,252.8 1707.5,259.6" fill="none" stroke="#e01010" stroke-width="1"/><polyline points="38.0,250.3 55.0,250.2 100.0,250.1 130.0,251.2 160.0,251.2 175.0,251.0 190.0,250.6 205.0,250.2 216.0,250.4 227.5,251.0 237.5,251.4 250.0,251.0 265.0,250.2 280.0,249.7 305.0,249.7 325.0,249.8 337.5,250.6 355.0,251.2 372.5,251.4 390.0,252.4 405.0,253.5 420.0,254.3 442.5,254.0 455.0,253.0 470.0,251.9 490.0,251.5 515.0,251.5 573.8,253.8 618.8,253.0 637.5,253.8 675.0,253.8 690.0,252.7 702.5,252.0 727.5,251.4 750.0,250.8 762.5,250.0 777.5,250.6 792.5,250.1 815.0,250.7 840.0,251.1 885.0,251.1 915.0,252.7 935.0,253.4 950.0,253.3 980.0,254.2 1000.0,254.2 1023.8,252.9 1037.5,253.6 1055.0,253.5 1080.0,252.3 1100.0,251.7 1132.5,251.1 1150.0,252.0 1165.0,254.2 1177.5,254.4 1195.0,255.3 1215.0,253.4 1225.0,252.7 1250.0,253.0 1262.5,253.2 1285.0,252.0 1300.0,251.7 1320.0,251.8 1340.0,251.2 1362.5,250.2 1387.5,250.1 1407.5,249.3 1412.5,249.1 1425.0,249.4 1462.5,249.3 1475.0,249.0 1507.5,248.9 1520.0,249.3 1535.0,250.2 1552.5,249.7 1572.5,250.3 1585.0,250.9 1625.0,250.6 1646.0,249.0 1660.0,249.9 1680.0,250.5 1707.5,251.8" fill="none" stroke="#20b020" stroke-width="1.2"/><polyline points="38.0,244.2 300.0,244.5 420.0,242.0 510.0,238.8 600.0,235.0 740.0,230.5 760.0,232.0 800.0,233.0 950.0,234.0 1100.0,230.0 1200.0,227.0 1360.0,227.0 1400.0,228.8 1500.0,230.5 1590.0,234.5 1707.0,234.5" fill="none" stroke="#ffffff" stroke-width="1.05" stroke-dasharray="4 3.5"/><polyline points="38.0,260.0 200.0,260.0 400.0,262.0 520.0,266.0 630.0,270.0 800.0,271.5 1035.0,270.8 1120.0,272.0 1200.0,276.0 1300.0,275.5 1430.0,274.0 1500.0,272.5 1600.0,268.5 1707.0,268.0" fill="none" stroke="#ffffff" stroke-width="1.05" stroke-dasharray="4 3.5"/><polyline points="38.0,250.0 55.0,249.0 100.0,248.5 130.0,257.5 160.0,257.5 175.0,256.0 190.0,252.5 205.0,248.8 216.0,250.5 227.5,256.0 237.5,258.8 250.0,256.0 265.0,248.8 280.0,244.5 305.0,244.5 325.0,245.8 337.5,252.0 355.0,257.5 372.5,258.8 390.0,267.5 405.0,276.2 420.0,283.0 442.5,280.5 455.0,272.0 470.0,263.0 490.0,260.0 515.0,260.0 573.8,278.8 618.8,272.0 637.5,278.8 675.0,278.8 690.0,270.0 702.5,263.8 727.5,258.8 750.0,253.8 762.5,247.5 777.5,252.5 792.5,248.0 815.0,253.0 840.0,256.2 885.0,256.2 915.0,270.0 935.0,275.5 950.0,274.5 980.0,282.5 1000.0,282.0 1023.8,271.2 1037.5,277.0 1055.0,276.2 1080.0,266.2 1100.0,261.2 1132.5,256.2 1150.0,263.8 1165.0,282.5 1177.5,283.8 1195.0,291.2 1215.0,275.5 1225.0,270.0 1250.0,272.0 1262.5,273.8 1285.0,263.8 1300.0,261.2 1320.0,262.5 1340.0,257.5 1362.5,248.8 1387.5,248.0 1407.5,241.2 1412.5,240.0 1425.0,242.5 1462.5,241.2 1475.0,238.8 1507.5,238.0 1520.0,241.2 1535.0,248.8 1552.5,245.0 1572.5,250.0 1585.0,255.0 1625.0,252.5 1646.0,238.8 1660.0,246.2 1680.0,251.2 1707.5,262.5" fill="none" stroke="#ff6a1e" stroke-width="5" stroke-linejoin="round"/><polyline points="38.0,235.0 45.5,235.0 61.0,235.0 76.5,235.0 92.1,235.0 107.6,235.0 123.1,235.0 138.7,235.0 154.2,235.0 169.7,235.0 185.2,235.0 200.8,235.0 216.3,235.0 231.8,267.3 247.3,267.3 262.9,235.0 278.4,235.0 293.9,235.0 309.4,235.0 324.9,235.0 340.5,235.0 356.0,235.0 371.5,235.0 387.1,267.3 402.6,267.3 418.1,267.3 433.6,267.3 449.2,267.3 464.7,267.3 480.2,267.3 495.7,267.3 511.2,267.3 526.8,267.3 542.3,267.3 557.8,267.3 573.4,267.3 588.9,267.3 604.4,267.3 619.9,267.3 635.5,267.3 651.0,267.3 666.5,267.3 682.0,267.3 697.6,267.3 713.1,267.3 728.6,267.3 744.1,267.3 759.6,235.0 775.2,235.0 790.7,235.0 806.2,235.0 821.8,235.0 837.3,267.3 852.8,267.3 868.3,267.3 883.9,267.3 899.4,267.3 914.9,267.3 930.4,267.3 946.0,267.3 961.5,267.3 977.0,267.3 992.5,267.3 1008.1,267.3 1023.6,267.3 1039.1,267.3 1054.6,267.3 1070.2,267.3 1085.7,267.3 1101.2,267.3 1116.7,267.3 1132.2,267.3 1147.8,267.3 1163.3,267.3 1178.8,267.3 1194.4,267.3 1209.9,267.3 1225.4,267.3 1240.9,267.3 1256.5,267.3 1272.0,267.3 1287.5,267.3 1303.0,267.3 1318.5,267.3 1334.1,267.3 1349.6,267.3 1365.1,267.3 1380.7,267.3 1396.2,267.3 1411.7,235.0 1427.2,235.0 1442.8,235.0 1458.3,235.0 1473.8,235.0 1489.3,235.0 1504.9,235.0 1520.4,235.0 1535.9,235.0 1551.4,235.0 1567.0,235.0 1582.5,235.0 1598.0,267.3 1613.5,267.3 1629.0,235.0 1644.6,235.0 1660.1,235.0 1675.6,235.0 1691.2,235.0 1706.7,267.3" fill="none" stroke="#fffff0" stroke-width="5" stroke-linejoin="miter"/><polyline points="38.0,251.6 45.5,251.6 61.0,251.6 76.5,251.6 92.1,251.6 107.6,251.6 123.1,251.6 138.7,251.6 154.2,251.6 169.7,251.6 185.2,251.6 200.8,251.6 216.3,251.6 231.8,251.6 247.3,251.6 262.9,251.6 278.4,251.6 293.9,251.6 309.4,251.6 324.9,251.6 340.5,251.6 356.0,251.6 371.5,251.6 387.1,251.6 402.6,251.6 418.1,251.6 433.6,251.6 449.2,251.6 464.7,251.6 480.2,251.6 495.7,251.6 511.2,251.6 526.8,260.6 542.3,251.6 557.8,251.6 573.4,251.6 588.9,251.6 604.4,251.6 619.9,251.6 635.5,260.6 651.0,251.6 666.5,251.6 682.0,251.6 697.6,251.6 713.1,251.6 728.6,251.6 744.1,251.6 759.6,251.6 775.2,251.6 790.7,251.6 806.2,251.6 821.8,251.6 837.3,251.6 852.8,251.6 868.3,251.6 883.9,251.6 899.4,251.6 914.9,251.6 930.4,251.6 946.0,251.6 961.5,251.6 977.0,251.6 992.5,251.6 1008.1,251.6 1023.6,251.6 1039.1,260.6 1054.6,251.6 1070.2,251.6 1085.7,251.6 1101.2,251.6 1116.7,251.6 1132.2,251.6 1147.8,251.6 1163.3,260.6 1178.8,251.6 1194.4,251.6 1209.9,251.6 1225.4,251.6 1240.9,251.6 1256.5,251.6 1272.0,251.6 1287.5,251.6 1303.0,251.6 1318.5,260.6 1334.1,251.6 1349.6,251.6 1365.1,251.6 1380.7,251.6 1396.2,251.6 1411.7,251.6 1427.2,251.6 1442.8,251.6 1458.3,251.6 1473.8,251.6 1489.3,251.6 1504.9,251.6 1520.4,251.6 1535.9,251.6 1551.4,251.6 1567.0,251.6 1582.5,251.6 1598.0,251.6 1613.5,251.6 1629.0,251.6 1644.6,251.6 1660.1,251.6 1675.6,251.6 1691.2,251.6 1706.7,251.6 1707.5,251.6" fill="none" stroke="#87ceeb" stroke-width="3.6" stroke-linejoin="round"/><polyline points="38.0,247.6 45.5,243.6 61.0,251.6 76.5,251.6 92.1,251.6 107.6,251.6 123.1,251.6 138.7,251.6 154.2,251.6 169.7,243.6 185.2,251.6 200.8,251.6 216.3,251.6 231.8,251.6 247.3,251.6 262.9,251.6 278.4,251.6 293.9,251.6 309.4,251.6 324.9,251.6 340.5,251.6 356.0,251.6 371.5,251.6 387.1,251.6 402.6,251.6 418.1,251.6 433.6,251.6 449.2,251.6 464.7,240.6 480.2,251.6 495.7,251.6 511.2,251.6 526.8,251.6 542.3,251.6 557.8,251.6 573.4,251.6 588.9,251.6 604.4,251.6 619.9,240.6 635.5,251.6 651.0,251.6 666.5,240.6 682.0,240.6 697.6,251.6 713.1,251.6 728.6,251.6 744.1,251.6 759.6,251.6 775.2,251.6 790.7,251.6 806.2,251.6 821.8,251.6 837.3,251.6 852.8,251.6 868.3,251.6 883.9,251.6 899.4,251.6 914.9,251.6 930.4,251.6 946.0,251.6 961.5,251.6 977.0,251.6 992.5,251.6 1008.1,251.6 1023.6,240.6 1039.1,251.6 1054.6,251.6 1070.2,240.6 1085.7,251.6 1101.2,251.6 1116.7,251.6 1132.2,251.6 1147.8,251.6 1163.3,251.6 1178.8,251.6 1194.4,251.6 1209.9,251.6 1225.4,251.6 1240.9,251.6 1256.5,251.6 1272.0,251.6 1287.5,251.6 1303.0,251.6 1318.5,251.6 1334.1,251.6 1349.6,251.6 1365.1,251.6 1380.7,251.6 1396.2,251.6 1411.7,251.6 1427.2,251.6 1442.8,251.6 1458.3,251.6 1473.8,251.6 1489.3,251.6 1504.9,251.6 1520.4,251.6 1535.9,251.6 1551.4,251.6 1567.0,251.6 1582.5,251.6 1598.0,251.6 1613.5,251.6 1629.0,251.6 1644.6,242.6 1660.1,251.6 1675.6,251.6 1691.2,251.6 1706.7,251.6 1707.5,251.6" fill="none" stroke="#87ceeb" stroke-width="3.6" stroke-linejoin="round"/><path d="M1707.5,251.6 H1866" stroke="#e8e8f0" stroke-width="1.2"/><path d="M1629.5,219.5 V298.4" stroke="#2fd02f" stroke-width="1"/><path d="M1707.2,219.5 V298.4" stroke="#e81414" stroke-width="1.4"/><path d="M1854.7,219.5 V298.4" stroke="#fff" stroke-width="1.6"/><path d="M1854.7,252.2 h10.5M1854.7,230.0 h5M1854.7,240.4 h5M1854.7,262.9 h5M1854.7,272.9 h5M1854.7,284.0 h5M1854.7,295.6 h5" stroke="#fff" stroke-width="1.25" fill="none"/><text x="1912" y="259" font-size="15.5" fill="#e8e8e8" text-anchor="end" font-family="Liberation Sans, sans-serif">0</text></svg>
<svg style="left:38px;top:331px" width="1880" height="223.5" viewBox="38 331 1880 223.5"><rect x="38" y="331" width="1880" height="223.5" fill="#808080"/><path d="M38,331.5 H1918" stroke="#5e5e5e" stroke-width="1.4"/><path d="M38,377.0 H1854.7M38,398.7 H1854.7M38,420.4 H1854.7M38,442.2 H1854.7M38,463.9 H1854.7" stroke="#101010" stroke-width="1.1" stroke-dasharray="4.5 3.5" fill="none"/><polyline points="38.0,432.5 68.0,432.5 107.0,427.0 135.0,427.0 160.0,432.5 215.0,432.0 230.0,427.0 262.0,435.0 295.0,435.0 337.0,427.5 352.0,431.0 372.0,427.0 435.0,427.0 460.0,432.5 500.0,432.0 527.0,427.0 545.0,431.0 572.0,427.0 602.0,427.0 615.0,431.0 635.0,427.0 655.0,427.0 695.0,435.0 765.0,435.0 790.0,432.5 835.0,431.0 850.0,427.0 870.0,430.0 900.0,427.0 947.0,427.0 965.0,429.0 975.0,427.0 1010.0,427.0 1024.5,433.0 1038.0,427.0 1057.0,427.0 1086.0,435.0 1135.0,435.0 1165.0,427.0 1202.0,427.0 1225.0,432.5 1250.0,428.8 1275.0,428.8 1289.0,435.0 1305.0,432.0 1320.0,428.8 1335.0,427.5 1350.0,434.5 1443.0,435.5 1454.0,432.8 1473.0,435.5 1516.0,435.5 1538.0,426.5 1552.0,429.0 1565.0,426.5 1617.0,426.5 1630.0,431.0 1646.0,433.3 1660.0,429.0 1673.0,426.5 1706.0,426.5" fill="none" stroke="#f0f000" stroke-width="1.1"/><polyline points="38.0,387.5 92.5,397.5 135.0,427.5 153.8,436.8 185.0,418.8 216.0,420.0 235.0,435.5 250.0,432.5 263.8,417.5 296.0,400.0 310.0,401.2 342.5,423.8 387.5,446.2 418.8,495.0 434.5,506.8 450.0,491.0 466.0,467.5 497.5,448.8 510.0,446.8 527.5,457.5 542.5,458.0 575.0,490.5 588.8,484.2 605.0,484.2 621.2,470.0 651.2,481.8 667.5,481.8 683.8,473.8 712.5,430.0 745.0,395.0 761.2,386.2 792.5,388.0 807.5,399.2 822.5,406.8 852.5,427.5 885.0,433.8 900.0,446.2 915.0,467.5 930.0,488.8 947.5,494.5 962.5,492.5 992.5,525.8 1008.0,528.0 1024.5,512.5 1038.8,517.5 1056.0,517.5 1071.0,512.5 1102.5,452.5 1133.8,435.0 1148.8,440.5 1195.0,536.2 1210.5,525.0 1226.0,488.8 1241.0,478.0 1256.0,472.0 1273.8,468.8 1303.8,447.5 1320.0,451.8 1335.0,450.0 1365.0,416.2 1381.0,408.0 1396.0,408.0 1412.5,393.5 1442.0,372.4 1474.5,367.0 1492.0,356.0 1505.6,352.0 1520.5,355.3 1568.0,413.0 1584.0,438.8 1615.0,470.5 1630.0,465.8 1645.0,447.0 1660.0,454.5 1692.5,487.5 1706.0,503.8" fill="none" stroke="#fbfbd4" stroke-width="1.1"/><polyline points="38.0,443.8 45.5,431.2 61.0,431.2 76.5,431.2 92.1,431.2 107.6,431.2 123.1,431.2 138.7,431.2 154.2,431.2 169.7,431.2 185.2,431.2 200.8,436.0 216.3,431.2 231.8,431.2 247.3,431.2 262.9,431.2 278.4,431.2 293.9,431.2 309.4,441.0 324.9,431.2 340.5,431.2 356.0,431.2 371.5,431.2 387.1,431.2 402.6,431.2 418.1,431.2 433.6,431.2 449.2,410.0 464.7,431.2 480.2,431.2 495.7,431.2 511.2,431.2 526.8,431.2 542.3,425.5 557.8,431.2 573.4,431.2 588.9,420.5 604.4,431.2 619.9,431.2 635.5,431.2 651.0,431.2 666.5,420.5 682.0,431.2 697.6,431.2 713.1,431.2 728.6,431.2 744.1,431.2 759.6,431.2 775.2,441.2 790.7,431.2 806.2,431.2 821.8,431.2 837.3,431.2 852.8,431.2 868.3,431.2 883.9,431.2 899.4,431.2 914.9,431.2 930.4,431.2 946.0,431.2 961.5,411.2 977.0,431.2 992.5,431.2 1008.1,431.2 1023.6,408.8 1039.1,431.2 1054.6,431.2 1070.2,420.0 1085.7,431.2 1101.2,431.2 1116.7,431.2 1132.2,431.2 1147.8,431.2 1163.3,431.2 1178.8,431.2 1194.4,431.2 1209.9,408.8 1225.4,431.2 1240.9,431.2 1256.5,431.2 1272.0,431.2 1287.5,431.2 1303.0,431.2 1318.5,431.2 1334.1,425.5 1349.6,431.2 1365.1,431.2 1380.7,431.2 1396.2,431.2 1411.7,431.2 1427.2,431.2 1442.8,431.2 1458.3,431.2 1473.8,431.2 1489.3,431.2 1504.9,431.2 1520.4,441.5 1535.9,431.2 1551.4,431.2 1567.0,431.2 1582.5,431.2 1598.0,431.2 1613.5,431.2 1629.0,421.0 1644.6,431.2 1660.1,431.2 1675.6,431.2 1691.2,431.2 1706.7,431.2" fill="none" stroke="#000" stroke-width="2.2" stroke-linejoin="round"/><polyline points="38.0,453.0 45.5,453.0 185.2,453.0 200.8,457.5 293.9,457.5 309.4,469.2 433.6,469.2 449.2,409.2 526.8,409.2 542.3,404.2 573.4,404.2 588.9,392.5 651.0,392.5 666.5,383.0 759.6,383.0 775.2,441.8 946.0,441.8 961.5,409.2 1008.1,409.2 1023.6,388.0 1054.6,388.0 1070.2,376.8 1194.4,376.8 1209.9,355.5 1318.5,355.5 1334.1,350.5 1504.9,350.5 1520.4,441.5 1613.5,441.5 1629.0,420.3 1706.7,420.3" fill="none" stroke="#8b0000" stroke-width="3.4" stroke-linejoin="round"/><path d="M1629.5,331 V554.5" stroke="#2fd02f" stroke-width="1"/><path d="M1707.2,331 V554.5" stroke="#e81414" stroke-width="1.4"/><path d="M1854.7,331 V554.5" stroke="#e6e6e6" stroke-width="1.6"/><path d="M1854.7,377.0 h10.5M1854.7,431.3 h10.5M1854.7,485.6 h10.5M1854.7,539.9 h10.5M1854.7,333.6 h5M1854.7,344.4 h5M1854.7,355.3 h5M1854.7,366.1 h5M1854.7,387.9 h5M1854.7,398.7 h5M1854.7,409.6 h5M1854.7,420.4 h5M1854.7,442.2 h5M1854.7,453.0 h5M1854.7,463.9 h5M1854.7,474.7 h5M1854.7,496.5 h5M1854.7,507.3 h5M1854.7,518.2 h5M1854.7,529.0 h5M1854.7,550.8 h5" stroke="#e6e6e6" stroke-width="1.25" fill="none"/><text x="1912" y="383.5" font-size="15.5" fill="#e8e8e8" text-anchor="end" font-family="Liberation Sans, sans-serif">50</text><text x="1912" y="437.8" font-size="15.5" fill="#e8e8e8" text-anchor="end" font-family="Liberation Sans, sans-serif">0</text><text x="1912" y="492.1" font-size="15.5" fill="#e8e8e8" text-anchor="end" font-family="Liberation Sans, sans-serif">-50</text><text x="1912" y="546.4" font-size="15.5" fill="#e8e8e8" text-anchor="end" font-family="Liberation Sans, sans-serif">-100</text></svg>
<svg style="left:38px;top:587px" width="1880" height="354.3" viewBox="38 587 1880 354.3"><rect x="38" y="587" width="1880" height="354.3" fill="#000"/><path d="M38,587.5 H1918" stroke="#3a3a3a" stroke-width="1"/><path d="M43,901 l7,-7.2M53,901 l7,-7.2M63,901 l7,-7.2M73,901 l7,-7.2M83,901 l7,-7.2M93,901 l7,-7.2M103,901 l7,-7.2M113,901 l7,-7.2M123,901 l7,-7.2M133,901 l7,-7.2M143,901 l7,-7.2M153,901 l7,-7.2M163,901 l7,-7.2M173,901 l7,-7.2M183,901 l7,-7.2M193,901 l7,-7.2M203,901 l7,-7.2M213,901 l7,-7.2M253,901 l7,-7.2M263,901 l7,-7.2M273,901 l7,-7.2M283,901 l7,-7.2M293,901 l7,-7.2M303,901 l7,-7.2M313,901 l7,-7.2M323,901 l7,-7.2M333,901 l7,-7.2M343,901 l7,-7.2M353,901 l7,-7.2M363,901 l7,-7.2M373,901 l7,-7.2M753,901 l7,-7.2M763,901 l7,-7.2M773,901 l7,-7.2M783,901 l7,-7.2M793,901 l7,-7.2M803,901 l7,-7.2M813,901 l7,-7.2M823,901 l7,-7.2M1403,901 l7,-7.2M1413,901 l7,-7.2M1423,901 l7,-7.2M1433,901 l7,-7.2M1443,901 l7,-7.2M1453,901 l7,-7.2M1463,901 l7,-7.2M1473,901 l7,-7.2M1483,901 l7,-7.2M1493,901 l7,-7.2M1503,901 l7,-7.2M1513,901 l7,-7.2M1523,901 l7,-7.2M1533,901 l7,-7.2M1543,901 l7,-7.2M1553,901 l7,-7.2M1563,901 l7,-7.2M1573,901 l7,-7.2M1583,901 l7,-7.2M1623,901 l7,-7.2M1633,901 l7,-7.2M1643,901 l7,-7.2M1653,901 l7,-7.2M1663,901 l7,-7.2M1673,901 l7,-7.2M1683,901 l7,-7.2M1693,901 l7,-7.2" stroke="#0c900c" stroke-width="1.35" fill="none"/><path d="M223,893.8 l7,7.2M233,893.8 l7,7.2M243,893.8 l7,7.2M383,893.8 l7,7.2M393,893.8 l7,7.2M403,893.8 l7,7.2M413,893.8 l7,7.2M423,893.8 l7,7.2M433,893.8 l7,7.2M443,893.8 l7,7.2M453,893.8 l7,7.2M523,893.8 l7,7.2M533,893.8 l7,7.2M543,893.8 l7,7.2M553,893.8 l7,7.2M563,893.8 l7,7.2M573,893.8 l7,7.2M583,893.8 l7,7.2M593,893.8 l7,7.2M603,893.8 l7,7.2M633,893.8 l7,7.2M643,893.8 l7,7.2M653,893.8 l7,7.2M833,893.8 l7,7.2M843,893.8 l7,7.2M853,893.8 l7,7.2M863,893.8 l7,7.2M873,893.8 l7,7.2M883,893.8 l7,7.2M893,893.8 l7,7.2M903,893.8 l7,7.2M913,893.8 l7,7.2M923,893.8 l7,7.2M933,893.8 l7,7.2M943,893.8 l7,7.2M953,893.8 l7,7.2M963,893.8 l7,7.2M973,893.8 l7,7.2M983,893.8 l7,7.2M993,893.8 l7,7.2M1003,893.8 l7,7.2M1033,893.8 l7,7.2M1043,893.8 l7,7.2M1053,893.8 l7,7.2M1153,893.8 l7,7.2M1163,893.8 l7,7.2M1173,893.8 l7,7.2M1183,893.8 l7,7.2M1193,893.8 l7,7.2M1203,893.8 l7,7.2M1213,893.8 l7,7.2M1223,893.8 l7,7.2M1233,893.8 l7,7.2M1243,893.8 l7,7.2M1253,893.8 l7,7.2M1263,893.8 l7,7.2M1273,893.8 l7,7.2M1283,893.8 l7,7.2M1293,893.8 l7,7.2M1303,893.8 l7,7.2M1313,893.8 l7,7.2M1323,893.8 l7,7.2M1333,893.8 l7,7.2M1343,893.8 l7,7.2M1353,893.8 l7,7.2M1363,893.8 l7,7.2M1373,893.8 l7,7.2M1383,893.8 l7,7.2M1393,893.8 l7,7.2M1593,893.8 l7,7.2M1603,893.8 l7,7.2M1613,893.8 l7,7.2M1703,893.8 l7,7.2M1713,893.8 l7,7.2" stroke="#cc0c0c" stroke-width="1.35" fill="none"/><path d="M457.5,900.6 H518.8M613.8,900.6 H627.5M660,900.6 H751.3M1016,900.6 H1031M1063.8,900.6 H1155" stroke="#ffff00" stroke-width="1.8" fill="none"/><path d="M126,894.2 h6.5M234.5,894.2 h6.5M312,894.2 h6.5M483,894.2 h6.5M561,894.2 h6.5M638,894.2 h6.5M701,894.2 h6.5M786,894.2 h6.5M917,894.2 h6.5M1042,894.2 h6.5M1104.5,894.2 h6.5M1274.5,894.2 h6.5M1492,894.2 h6.5M1602,894.2 h6.5M1657,894.2 h6.5M1707,894.2 h6.5" stroke="#1010e0" stroke-width="1.3" fill="none"/><clipPath id="c4"><rect x="38" y="587" width="1816.7" height="315"/></clipPath><g clip-path="url(#c4)"><path d="M86.5,646.3 h12.8 V650.0 h-12.8zM102.0,652.5 h12.8 V669.2 h-12.8zM117.5,662.5 h12.8 V675.0 h-12.8zM195.2,646.3 h12.8 V660.8 h-12.8zM226.2,657.5 h12.8 V673.3 h-12.8zM288.3,630.0 h12.8 V634.5 h-12.8zM319.4,631.3 h12.8 V648.3 h-12.8zM334.9,648.8 h12.8 V653.3 h-12.8zM365.9,641.2 h12.8 V654.5 h-12.8zM381.5,661.2 h12.8 V680.8 h-12.8zM397.0,678.7 h12.8 V707.0 h-12.8zM412.5,714.9 h12.8 v1.8 h-12.8zM428.0,706.2 h12.8 V722.0 h-12.8zM474.6,681.2 h12.8 V687.0 h-12.8zM505.6,678.8 h12.8 V685.8 h-12.8zM521.2,686.2 h12.8 V707.2 h-12.8zM552.2,696.2 h12.8 V717.2 h-12.8zM567.8,721.2 h12.8 V740.8 h-12.8zM598.8,716.2 h12.8 V725.8 h-12.8zM629.9,718.7 h12.8 V745.8 h-12.8zM660.9,736.2 h12.8 V745.8 h-12.8zM723.0,693.6 h12.8 v1.8 h-12.8zM769.6,662.5 h12.8 V680.8 h-12.8zM800.6,673.7 h12.8 V690.8 h-12.8zM831.7,695.0 h12.8 V707.0 h-12.8zM847.2,706.9 h12.8 v1.8 h-12.8zM878.2,692.5 h12.8 V708.3 h-12.8zM893.8,710.0 h12.8 V727.0 h-12.8zM909.3,731.3 h12.8 V750.0 h-12.8zM924.8,742.5 h12.8 V759.7 h-12.8zM955.9,750.3 h12.8 V757.0 h-12.8zM971.4,761.2 h12.8 V787.0 h-12.8zM986.9,780.0 h12.8 V798.3 h-12.8zM1033.5,776.3 h12.8 V805.5 h-12.8zM1095.6,756.3 h12.8 V765.5 h-12.8zM1142.2,757.5 h12.8 V782.0 h-12.8zM1157.7,791.3 h12.8 V835.8 h-12.8zM1188.8,840.0 h12.8 V849.5 h-12.8zM1235.3,802.5 h12.8 V820.8 h-12.8zM1250.8,821.2 h12.8 V828.3 h-12.8zM1297.4,808.7 h12.8 V814.7 h-12.8zM1312.9,815.0 h12.8 V824.7 h-12.8zM1375.0,786.2 h12.8 V792.0 h-12.8zM1421.6,763.8 h12.8 V768.7 h-12.8zM1452.7,758.7 h12.8 V764.5 h-12.8zM1514.8,729.9 h12.8 v1.8 h-12.8zM1530.3,733.7 h12.8 V758.3 h-12.8zM1561.3,756.2 h12.8 V774.7 h-12.8zM1576.9,780.0 h12.8 V788.3 h-12.8zM1592.4,786.2 h12.8 V792.0 h-12.8zM1607.9,787.5 h12.8 V804.7 h-12.8zM1654.5,778.3 h12.8 V797.0 h-12.8zM1670.0,800.3 h12.8 V810.8 h-12.8zM1685.5,814.9 h12.8 v1.8 h-12.8zM1701.1,811.2 h12.8 V834.7 h-12.8z" fill="#ff6a1e"/><path d="M92.9,639.7 V646.3M92.9,650.0 V656.7M108.4,647.5 V652.5M108.4,669.2 V670.8M123.9,653.3 V662.5M123.9,675.0 V675.8M201.6,660.8 V665.8M232.6,655.0 V657.5M232.6,673.3 V680.8M294.7,625.8 V630.0M325.8,628.3 V631.3M325.8,648.3 V653.3M341.3,645.8 V648.8M341.3,653.3 V670.8M372.3,640.0 V641.2M372.3,654.5 V664.7M403.4,667.5 V678.7M418.9,703.7 V715.8M418.9,715.8 V742.5M434.4,696.3 V706.2M434.4,722.0 V725.8M481.0,687.0 V697.0M512.0,670.0 V678.8M512.0,685.8 V690.8M527.6,682.2 V686.2M527.6,707.2 V713.7M558.6,717.2 V720.3M574.1,715.0 V721.2M574.1,740.8 V742.5M605.2,710.0 V716.2M605.2,725.8 V730.8M667.3,728.3 V736.2M729.4,683.3 V694.5M807.0,668.3 V673.7M807.0,690.8 V697.5M838.1,707.0 V710.8M853.6,695.0 V707.8M884.6,685.0 V692.5M900.2,727.0 V745.0M915.7,750.0 V753.3M931.2,724.7 V742.5M962.3,724.7 V750.3M962.3,757.0 V764.7M977.8,755.0 V761.2M977.8,787.0 V790.8M993.3,772.5 V780.0M1039.9,805.5 V810.3M1102.0,752.5 V756.3M1102.0,765.5 V770.8M1148.6,755.0 V757.5M1164.1,835.8 V838.3M1195.2,849.5 V857.0M1241.7,797.2 V802.5M1257.2,818.3 V821.2M1257.2,828.3 V837.0M1303.8,802.5 V808.7M1303.8,814.7 V815.8M1319.3,811.3 V815.0M1319.3,824.7 V833.3M1381.5,783.3 V786.2M1381.5,792.0 V798.3M1428.0,758.0 V763.8M1428.0,768.7 V769.5M1459.1,749.7 V758.7M1521.2,726.7 V730.8M1521.2,730.8 V735.8M1567.8,746.3 V756.2M1583.3,773.3 V780.0M1583.3,788.3 V793.3M1598.8,783.0 V786.2M1598.8,792.0 V803.3M1614.3,782.5 V787.5M1614.3,804.7 V808.3M1660.9,797.0 V803.3M1676.4,794.7 V800.3M1676.4,810.8 V818.3M1692.0,806.2 V815.8M1692.0,815.8 V820.0" stroke="#ff6a1e" stroke-width="1.3" fill="none"/><path d="M133.1,667.5 h12.8 V672.0 h-12.8z" fill="#8aa4c8"/><path d="M40.5,652.3 h11.600000000000001 V657.7 h-11.600000000000001zM56.0,651.4 h11.600000000000001 V652.4 h-11.600000000000001zM70.9,648.0 h12.8M148.6,670.0 h12.8M164.7,648.1 h11.600000000000001 V661.4 h-11.600000000000001zM180.2,647.6 h11.600000000000001 V649.9 h-11.600000000000001zM211.3,654.6 h11.600000000000001 V661.4 h-11.600000000000001zM242.3,649.6 h11.600000000000001 V668.4 h-11.600000000000001zM257.9,630.9 h11.600000000000001 V647.7 h-11.600000000000001zM272.8,629.5 h12.8M304.4,630.9 h11.600000000000001 V632.7 h-11.600000000000001zM351.0,643.1 h11.600000000000001 V653.6 h-11.600000000000001zM444.2,685.9 h11.600000000000001 V719.7 h-11.600000000000001zM459.7,671.1 h11.600000000000001 V683.6 h-11.600000000000001zM490.7,684.8 h11.600000000000001 V686.6 h-11.600000000000001zM537.3,693.6 h11.600000000000001 V701.1 h-11.600000000000001zM583.9,710.9 h11.600000000000001 V754.7 h-11.600000000000001zM614.9,715.9 h11.600000000000001 V722.4 h-11.600000000000001zM646.0,732.3 h11.600000000000001 V746.1 h-11.600000000000001zM677.0,735.6 h11.600000000000001 V746.4 h-11.600000000000001zM692.6,705.9 h11.600000000000001 V729.7 h-11.600000000000001zM708.1,695.9 h11.600000000000001 V706.4 h-11.600000000000001zM739.1,679.8 h11.600000000000001 V693.6 h-11.600000000000001zM754.6,662.3 h11.600000000000001 V679.9 h-11.600000000000001zM785.7,672.3 h11.600000000000001 V679.7 h-11.600000000000001zM816.8,690.6 h11.600000000000001 V692.7 h-11.600000000000001zM863.3,695.9 h11.600000000000001 V709.9 h-11.600000000000001zM941.0,752.3 h11.600000000000001 V760.2 h-11.600000000000001zM1003.1,782.3 h11.600000000000001 V804.7 h-11.600000000000001zM1018.6,769.4 h11.600000000000001 V783.6 h-11.600000000000001zM1049.6,791.9 h11.600000000000001 V801.1 h-11.600000000000001zM1065.1,791.1 h11.600000000000001 V797.4 h-11.600000000000001zM1080.7,755.9 h11.600000000000001 V789.9 h-11.600000000000001zM1111.7,766.1 h11.600000000000001 V767.7 h-11.600000000000001zM1127.2,756.1 h11.600000000000001 V759.9 h-11.600000000000001zM1173.8,828.4 h11.600000000000001 V832.7 h-11.600000000000001zM1204.9,834.8 h11.600000000000001 V842.7 h-11.600000000000001zM1220.4,804.4 h11.600000000000001 V831.1 h-11.600000000000001zM1267.0,820.9 h11.600000000000001 V829.9 h-11.600000000000001zM1282.5,805.6 h11.600000000000001 V820.2 h-11.600000000000001zM1329.1,814.4 h11.600000000000001 V832.7 h-11.600000000000001zM1344.6,799.8 h11.600000000000001 V808.9 h-11.600000000000001zM1360.1,786.9 h11.600000000000001 V798.9 h-11.600000000000001zM1391.2,781.9 h11.600000000000001 V794.9 h-11.600000000000001zM1406.7,762.3 h11.600000000000001 V781.1 h-11.600000000000001zM1437.7,757.3 h11.600000000000001 V764.9 h-11.600000000000001zM1468.8,746.1 h11.600000000000001 V759.7 h-11.600000000000001zM1484.3,732.3 h11.600000000000001 V741.4 h-11.600000000000001zM1499.8,726.9 h11.600000000000001 V733.9 h-11.600000000000001zM1545.8,759.7 h12.8M1624.0,785.9 h11.600000000000001 V803.6 h-11.600000000000001zM1639.6,766.1 h11.600000000000001 V781.1 h-11.600000000000001z" fill="none" stroke="#8aa4c8" stroke-width="1.4"/><path d="M46.3,649.0 V651.7M61.8,646.7 V650.8M77.3,644.0 V653.3M139.5,657.5 V685.8M155.0,665.0 V688.3M186.0,645.0 V647.0M186.0,650.5 V654.0M217.1,641.7 V654.0M217.1,662.0 V665.8M248.1,669.0 V670.8M279.2,627.5 V632.5M310.2,625.0 V630.3M310.2,633.3 V634.0M356.8,638.7 V642.5M356.8,654.2 V659.7M450.0,684.0 V685.3M450.0,720.3 V728.3M465.5,668.3 V670.5M465.5,684.2 V690.8M496.5,681.3 V684.2M496.5,687.2 V695.0M543.1,690.0 V693.0M589.7,709.2 V710.3M589.7,755.3 V763.3M620.7,703.3 V715.3M651.8,727.5 V731.7M651.8,746.7 V754.2M682.8,732.5 V735.0M682.8,747.0 V754.7M698.4,730.3 V735.8M713.9,691.3 V695.3M713.9,707.0 V708.7M760.4,659.7 V661.7M760.4,680.5 V683.7M791.5,680.3 V685.8M822.5,685.0 V690.0M822.5,693.3 V697.0M869.1,693.3 V695.3M869.1,710.5 V713.7M946.8,746.2 V751.7M946.8,760.8 V773.3M1008.9,778.7 V781.7M1008.9,805.3 V813.3M1024.4,784.2 V790.0M1055.4,790.0 V791.3M1055.4,801.7 V823.3M1071.0,786.3 V790.5M1071.0,798.0 V810.8M1117.5,751.3 V765.5M1117.5,768.3 V770.8M1133.0,752.5 V755.5M1133.0,760.5 V769.7M1179.6,818.7 V827.8M1179.6,833.3 V844.2M1210.7,825.0 V834.2M1226.2,831.7 V837.5M1272.8,830.5 V837.5M1288.3,803.3 V805.0M1288.3,820.8 V823.3M1334.9,833.3 V840.8M1350.4,809.5 V822.5M1365.9,799.5 V801.0M1397.0,778.3 V781.3M1397.0,795.5 V803.8M1412.5,758.3 V761.7M1412.5,781.7 V787.5M1443.5,753.3 V756.7M1474.6,760.3 V763.3M1490.1,742.0 V745.8M1505.7,722.5 V726.3M1505.7,734.5 V735.8M1552.2,754.0 V762.5M1645.4,762.5 V765.5" stroke="#8aa4c8" stroke-width="1.3" fill="none"/><polyline points="37.5,660.0 46.3,654.2 61.8,653.3 77.3,651.7 92.9,654.2 108.4,680.0 123.9,684.5 139.5,681.7 155.0,678.0 170.5,648.0 186.0,650.0 201.6,672.8 217.1,662.5 232.6,688.0 248.1,655.0 263.7,630.3 279.2,634.2 294.7,643.0 310.2,634.5 325.8,658.3 341.3,665.8 356.8,648.8 372.3,666.7 387.9,698.3 403.4,728.7 418.9,735.3 434.4,733.7 450.0,687.5 465.5,674.7 481.0,703.3 496.5,695.0 512.0,695.3 527.6,721.7 543.1,698.3 558.6,729.2 574.1,760.3 589.7,718.0 605.2,738.0 620.7,723.3 636.2,769.2 651.8,740.5 667.3,757.0 682.8,744.2 698.4,705.0 713.9,696.7 729.4,702.8 744.9,683.3 760.4,661.3 776.0,692.0 791.5,679.2 807.0,705.8 822.5,699.7 838.1,721.7 853.6,716.3 869.1,697.8 884.6,716.7 900.2,742.5 915.7,768.3 931.2,775.8 946.8,763.7 962.3,767.0 977.8,809.7 993.3,818.3 1008.9,790.8 1024.4,772.5 1039.9,827.0 1055.4,805.8 1071.0,801.3 1086.5,756.7 1102.0,778.3 1117.5,775.0 1133.0,763.3 1148.6,795.8 1164.1,866.7 1179.6,845.0 1195.2,868.7 1210.7,839.7 1226.2,804.7 1241.7,829.2 1257.2,843.3 1272.8,831.3 1288.3,808.0 1303.8,822.5 1319.3,838.0 1334.9,821.7 1350.4,801.7 1365.9,790.5 1381.5,803.3 1397.0,788.3 1412.5,762.8 1428.0,775.8 1443.5,761.3 1459.1,765.3 1474.6,747.5 1490.1,731.7 1505.7,729.2 1521.2,737.2 1536.7,775.3 1552.2,767.5 1567.8,785.8 1583.3,802.5 1598.8,804.5 1614.3,816.7 1629.8,788.3 1645.4,763.7 1660.9,811.3 1676.4,829.2 1692.0,826.3 1707.5,848.0" fill="none" stroke="#22b422" stroke-width="1.05" stroke-linejoin="round"/><polyline points="37.5,651.7 46.3,647.0 61.8,645.0 77.3,643.7 92.9,648.0 108.4,668.3 123.9,670.3 139.5,663.3 155.0,658.7 170.5,631.3 186.0,636.7 201.6,660.0 217.1,648.0 232.6,672.5 248.1,632.5 263.7,614.2 279.2,620.0 294.7,633.3 310.2,625.0 325.8,649.2 341.3,651.7 356.8,632.5 372.3,648.3 387.9,678.3 403.4,706.7 418.9,710.8 434.4,710.0 450.0,660.0 465.5,649.2 481.0,680.8 496.5,677.5 512.0,680.8 527.6,706.7 543.1,684.5 558.6,716.7 574.1,741.7 589.7,695.3 605.2,714.2 620.7,700.5 636.2,746.7 651.8,721.7 667.3,740.0 682.8,724.2 698.4,686.7 713.9,680.0 729.4,687.5 744.9,670.0 760.4,649.2 776.0,677.5 791.5,665.0 807.0,688.3 822.5,683.8 838.1,706.7 853.6,702.8 869.1,686.7 884.6,705.0 900.2,726.7 915.7,750.8 931.2,753.3 946.8,740.0 962.3,743.3 977.8,778.3 993.3,793.3 1008.9,765.8 1024.4,750.0 1039.9,804.2 1055.4,783.0 1071.0,780.0 1086.5,732.5 1102.0,756.3 1117.5,756.3 1133.0,745.0 1148.6,781.7 1164.1,845.8 1179.6,821.7 1195.2,845.8 1210.7,816.7 1226.2,785.3 1241.7,813.3 1257.2,825.8 1272.8,813.3 1288.3,792.8 1303.8,807.5 1319.3,824.2 1334.9,803.3 1350.4,785.8 1365.9,772.5 1381.5,787.5 1397.0,772.5 1412.5,746.7 1428.0,758.7 1443.5,746.3 1459.1,753.0 1474.6,735.0 1490.1,720.5 1505.7,717.5 1521.2,725.8 1536.7,763.0 1552.2,758.3 1567.8,771.7 1583.3,788.3 1598.8,788.3 1614.3,797.5 1629.8,772.5 1645.4,748.0 1660.9,795.0 1676.4,812.2 1692.0,811.3 1707.5,830.0" fill="none" stroke="#f00808" stroke-width="1.05" stroke-linejoin="round"/></g><path d="M1629.5,587 V902" stroke="#2fd02f" stroke-width="1"/><path d="M1707.2,587 V902" stroke="#e81414" stroke-width="1.4"/><path d="M1702.6,747.5 h7.6 v16.2 h7.4 l-11.2,12.2 l-11.2,-12.2 h7.4z" fill="#ff0000"/><path d="M1627.6,830 l12.1,12.5 h-7.7 v15.8 h-8 v-15.8 h-8.4z" fill="#008a00"/><path d="M1854.7,587 V894.5" stroke="#fff" stroke-width="1.6"/><path d="M1854.7,608.4 h10.5M1854.7,628.1 h10.5M1854.7,647.9 h10.5M1854.7,667.6 h10.5M1854.7,687.4 h10.5M1854.7,707.1 h10.5M1854.7,726.8 h10.5M1854.7,746.6 h10.5M1854.7,766.3 h10.5M1854.7,786.1 h10.5M1854.7,805.8 h10.5M1854.7,825.5 h10.5M1854.7,845.3 h10.5M1854.7,865.0 h10.5M1854.7,884.8 h10.5M1854.7,598.5 h4.5M1854.7,618.3 h4.5M1854.7,638.0 h4.5M1854.7,657.8 h4.5M1854.7,677.5 h4.5M1854.7,697.2 h4.5M1854.7,717.0 h4.5M1854.7,736.7 h4.5M1854.7,756.4 h4.5M1854.7,776.2 h4.5M1854.7,795.9 h4.5M1854.7,815.7 h4.5M1854.7,835.4 h4.5M1854.7,855.1 h4.5M1854.7,874.9 h4.5" stroke="#fff" stroke-width="1.25" fill="none"/><text x="1912" y="615.8" font-size="15.5" fill="#f2f2f2" text-anchor="end" font-family="Liberation Sans, sans-serif">4900</text><text x="1912" y="635.5" font-size="15.5" fill="#f2f2f2" text-anchor="end" font-family="Liberation Sans, sans-serif">4800</text><text x="1912" y="655.3" font-size="15.5" fill="#f2f2f2" text-anchor="end" font-family="Liberation Sans, sans-serif">4700</text><text x="1912" y="675.0" font-size="15.5" fill="#f2f2f2" text-anchor="end" font-family="Liberation Sans, sans-serif">4600</text><text x="1912" y="694.8" font-size="15.5" fill="#f2f2f2" text-anchor="end" font-family="Liberation Sans, sans-serif">4500</text><text x="1912" y="714.5" font-size="15.5" fill="#f2f2f2" text-anchor="end" font-family="Liberation Sans, sans-serif">4400</text><text x="1912" y="734.2" font-size="15.5" fill="#f2f2f2" text-anchor="end" font-family="Liberation Sans, sans-serif">4300</text><text x="1912" y="754.0" font-size="15.5" fill="#f2f2f2" text-anchor="end" font-family="Liberation Sans, sans-serif">4200</text><text x="1912" y="773.7" font-size="15.5" fill="#f2f2f2" text-anchor="end" font-family="Liberation Sans, sans-serif">4100</text><text x="1912" y="793.5" font-size="15.5" fill="#f2f2f2" text-anchor="end" font-family="Liberation Sans, sans-serif">4000</text><text x="1912" y="813.2" font-size="15.5" fill="#f2f2f2" text-anchor="end" font-family="Liberation Sans, sans-serif">3900</text><text x="1912" y="832.9" font-size="15.5" fill="#f2f2f2" text-anchor="end" font-family="Liberation Sans, sans-serif">3800</text><text x="1912" y="852.7" font-size="15.5" fill="#f2f2f2" text-anchor="end" font-family="Liberation Sans, sans-serif">3700</text><text x="1912" y="872.4" font-size="15.5" fill="#f2f2f2" text-anchor="end" font-family="Liberation Sans, sans-serif">3600</text><text x="1912" y="892.2" font-size="15.5" fill="#f2f2f2" text-anchor="end" font-family="Liberation Sans, sans-serif">3500</text><rect x="1860" y="824.5" width="52" height="20" fill="#000" stroke="#fff" stroke-width="1.3"/><text x="1886" y="840" font-size="14.5" fill="#e01010" text-anchor="middle" textLength="48" lengthAdjust="spacingAndGlyphs" font-family="Liberation Sans, sans-serif">3753.79</text><path d="M38,901.6 H1854.7 M38,921.6 H1854.7 M1854.7,901 V941.3" stroke="#f4f4f4" stroke-width="1.4" fill="none"/><text x="48.8" y="917.3" font-size="15.2" fill="#fff" font-family="Liberation Sans, sans-serif">15</text><text x="95.4" y="917.3" font-size="15.2" fill="#fff" font-family="Liberation Sans, sans-serif">23</text><text x="126.4" y="917.3" font-size="15.2" fill="#fff" font-family="Liberation Sans, sans-serif">30</text><text x="157.5" y="917.3" font-size="15.2" fill="#fff" font-family="Liberation Sans, sans-serif">6</text><text x="204.0" y="917.3" font-size="15.2" fill="#fff" font-family="Liberation Sans, sans-serif">14</text><text x="235.1" y="917.3" font-size="15.2" fill="#fff" font-family="Liberation Sans, sans-serif">20</text><text x="266.2" y="917.3" font-size="15.2" fill="#fff" font-family="Liberation Sans, sans-serif">27</text><text x="312.7" y="917.3" font-size="15.2" fill="#fff" font-family="Liberation Sans, sans-serif">4</text><text x="343.8" y="917.3" font-size="15.2" fill="#fff" font-family="Liberation Sans, sans-serif">10</text><text x="390.4" y="917.3" font-size="15.2" fill="#fff" font-family="Liberation Sans, sans-serif">19</text><text x="421.4" y="917.3" font-size="15.2" fill="#fff" font-family="Liberation Sans, sans-serif">25</text><text x="452.5" y="917.3" font-size="15.2" fill="#fff" font-family="Liberation Sans, sans-serif">31</text><text x="499.0" y="917.3" font-size="15.2" fill="#fff" font-family="Liberation Sans, sans-serif">8</text><text x="530.1" y="917.3" font-size="15.2" fill="#fff" font-family="Liberation Sans, sans-serif">14</text><text x="576.7" y="917.3" font-size="15.2" fill="#fff" font-family="Liberation Sans, sans-serif">23</text><text x="607.7" y="917.3" font-size="15.2" fill="#fff" font-family="Liberation Sans, sans-serif">1</text><text x="638.8" y="917.3" font-size="15.2" fill="#fff" font-family="Liberation Sans, sans-serif">7</text><text x="685.3" y="917.3" font-size="15.2" fill="#fff" font-family="Liberation Sans, sans-serif">15</text><text x="716.4" y="917.3" font-size="15.2" fill="#fff" font-family="Liberation Sans, sans-serif">21</text><text x="763.0" y="917.3" font-size="15.2" fill="#fff" font-family="Liberation Sans, sans-serif">29</text><text x="794.0" y="917.3" font-size="15.2" fill="#fff" font-family="Liberation Sans, sans-serif">4</text><text x="840.6" y="917.3" font-size="15.2" fill="#fff" font-family="Liberation Sans, sans-serif">12</text><text x="871.6" y="917.3" font-size="15.2" fill="#fff" font-family="Liberation Sans, sans-serif">19</text><text x="902.7" y="917.3" font-size="15.2" fill="#fff" font-family="Liberation Sans, sans-serif">25</text><text x="949.3" y="917.3" font-size="15.2" fill="#fff" font-family="Liberation Sans, sans-serif">3</text><text x="980.3" y="917.3" font-size="15.2" fill="#fff" font-family="Liberation Sans, sans-serif">9</text><text x="1026.9" y="917.3" font-size="15.2" fill="#fff" font-family="Liberation Sans, sans-serif">17</text><text x="1057.9" y="917.3" font-size="15.2" fill="#fff" font-family="Liberation Sans, sans-serif">23</text><text x="1104.5" y="917.3" font-size="15.2" fill="#fff" font-family="Liberation Sans, sans-serif">1</text><text x="1135.5" y="917.3" font-size="15.2" fill="#fff" font-family="Liberation Sans, sans-serif">7</text><text x="1166.6" y="917.3" font-size="15.2" fill="#fff" font-family="Liberation Sans, sans-serif">13</text><text x="1213.2" y="917.3" font-size="15.2" fill="#fff" font-family="Liberation Sans, sans-serif">22</text><text x="1244.2" y="917.3" font-size="15.2" fill="#fff" font-family="Liberation Sans, sans-serif">28</text><text x="1275.3" y="917.3" font-size="15.2" fill="#fff" font-family="Liberation Sans, sans-serif">5</text><text x="1306.3" y="917.3" font-size="15.2" fill="#fff" font-family="Liberation Sans, sans-serif">11</text><text x="1352.9" y="917.3" font-size="15.2" fill="#fff" font-family="Liberation Sans, sans-serif">19</text><text x="1384.0" y="917.3" font-size="15.2" fill="#fff" font-family="Liberation Sans, sans-serif">25</text><text x="1430.5" y="917.3" font-size="15.2" fill="#fff" font-family="Liberation Sans, sans-serif">2</text><text x="1461.6" y="917.3" font-size="15.2" fill="#fff" font-family="Liberation Sans, sans-serif">8</text><text x="1508.2" y="917.3" font-size="15.2" fill="#fff" font-family="Liberation Sans, sans-serif">16</text><text x="1539.2" y="917.3" font-size="15.2" fill="#fff" font-family="Liberation Sans, sans-serif">22</text><text x="1585.8" y="917.3" font-size="15.2" fill="#fff" font-family="Liberation Sans, sans-serif">30</text><text x="1616.8" y="917.3" font-size="15.2" fill="#fff" font-family="Liberation Sans, sans-serif">6</text><text x="1647.9" y="917.3" font-size="15.2" fill="#fff" font-family="Liberation Sans, sans-serif">12</text><text x="1694.5" y="917.3" font-size="15.2" fill="#fff" font-family="Liberation Sans, sans-serif">20</text><text x="1725.5" y="917.3" font-size="15.2" fill="#fff" font-family="Liberation Sans, sans-serif">26</text><text x="1772.1" y="917.3" font-size="15.2" fill="#fff" font-family="Liberation Sans, sans-serif">4</text><text x="1803.1" y="917.3" font-size="15.2" fill="#fff" font-family="Liberation Sans, sans-serif">10</text><clipPath id="cx"><rect x="1847.5" y="902" width="6.4" height="19"/></clipPath><text clip-path="url(#cx)" x="1849.7" y="917.3" font-size="15.2" fill="#fff" font-family="Liberation Sans, sans-serif">17</text><text x="141.9" y="937.4" font-size="15.2" fill="#fff" font-family="Liberation Sans, sans-serif">December</text><text x="312.7" y="937.4" font-size="15.2" fill="#fff" font-family="Liberation Sans, sans-serif">2022</text><text x="468.0" y="937.4" font-size="15.2" fill="#fff" font-family="Liberation Sans, sans-serif">February</text><text x="607.7" y="937.4" font-size="15.2" fill="#fff" font-family="Liberation Sans, sans-serif">March</text><text x="794.0" y="937.4" font-size="15.2" fill="#fff" font-family="Liberation Sans, sans-serif">April</text><text x="949.3" y="937.4" font-size="15.2" fill="#fff" font-family="Liberation Sans, sans-serif">May</text><text x="1104.5" y="937.4" font-size="15.2" fill="#fff" font-family="Liberation Sans, sans-serif">June</text><text x="1275.3" y="937.4" font-size="15.2" fill="#fff" font-family="Liberation Sans, sans-serif">July</text><text x="1430.5" y="937.4" font-size="15.2" fill="#fff" font-family="Liberation Sans, sans-serif">August</text><text x="1601.3" y="937.4" font-size="15.2" fill="#fff" font-family="Liberation Sans, sans-serif">September</text><text x="1772.1" y="937.4" font-size="15.2" fill="#fff" font-family="Liberation Sans, sans-serif">October</text><text x="38" y="937.4" font-size="15.2" fill="#fff" font-family="Liberation Sans, sans-serif">r</text><path d="M46.6,902 V921M93.2,902 V921M124.2,902 V921M155.3,902 V921M201.8,902 V921M232.9,902 V921M264.0,902 V921M310.5,902 V921M341.6,902 V921M388.2,902 V921M419.2,902 V921M450.3,902 V921M496.8,902 V921M527.9,902 V921M574.5,902 V921M605.5,902 V921M636.6,902 V921M683.1,902 V921M714.2,902 V921M760.8,902 V921M791.8,902 V921M838.4,902 V921M869.4,902 V921M900.5,902 V921M947.1,902 V921M978.1,902 V921M1024.7,902 V921M1055.7,902 V921M1102.3,902 V921M1133.3,902 V921M1164.4,902 V921M1211.0,902 V921M1242.0,902 V921M1273.1,902 V921M1304.1,902 V921M1350.7,902 V921M1381.8,902 V921M1428.3,902 V921M1459.4,902 V921M1506.0,902 V921M1537.0,902 V921M1583.6,902 V921M1614.6,902 V921M1645.7,902 V921M1692.2,902 V921M1723.3,902 V921M1769.9,902 V921M1800.9,902 V921M1847.5,902 V921M139.8,921 V941.3M310.5,921 V941.3M465.8,921 V941.3M605.5,921 V941.3M791.8,921 V941.3M947.1,921 V941.3M1102.3,921 V941.3M1273.1,921 V941.3M1428.3,921 V941.3M1599.1,921 V941.3M1769.9,921 V941.3" stroke="#d4d4d4" stroke-width="1.5" fill="none"/><rect x="1855.5" y="901" width="63.299999999999955" height="41" fill="#f0f0f0"/></svg>
<div class="a" style="left:38px;top:941.3px;width:1818px;height:1.9px;background:#4a4a4a"></div><div class="a" style="left:38px;top:943.2px;width:1818px;height:1.8px;background:#fff"></div><div class="a" style="left:1855.5px;top:901px;width:61px;height:41px;background:#ebebeb;border-left:2px solid #c4c4c4;border-top:2px solid #a4a4a4;box-sizing:border-box"></div><svg style="left:1872px;top:909px" width="24" height="24"><circle cx="12" cy="12" r="10" fill="none" stroke="#ee1c1c" stroke-width="1.6"/><circle cx="8.2" cy="8.5" r="1.4" fill="#ee1c1c"/><circle cx="15.8" cy="8.5" r="1.4" fill="#ee1c1c"/><path d="M6.5,17 Q12,11 17.5,17" fill="none" stroke="#ee1c1c" stroke-width="1.6"/></svg><div class="a" style="left:1457.5px;top:953.5px;width:184px;height:6px;background:#858585"></div><div class="a" style="left:1665.5px;top:946px;width:1px;height:20px;background:#8a8a8a"></div><div class="a" style="left:1726px;top:946px;width:1px;height:20px;background:#8a8a8a"></div><div class="a" style="left:1838px;top:946px;width:1px;height:20px;background:#8a8a8a"></div><svg style="left:1673px;top:946.3px" width="19" height="19" viewBox="0 0 19 19" ><path d="M3,9.2 A6.4,6.4 0 0 1 13.2,4.4" fill="none" stroke="#3c3c3c" stroke-width="3.3"/><path d="M10.2,0.6 L17.6,2.6 L13.8,9.2z" fill="#3c3c3c"/><path d="M16,9.8 A6.4,6.4 0 0 1 5.8,14.6" fill="none" stroke="#3c3c3c" stroke-width="3.3"/><path d="M8.8,18.4 L1.4,16.4 L5.2,9.8z" fill="#3c3c3c"/></svg><span class="t" style="left:1703px;top:948px;font-size:16px;font-weight:bold;color:#4a4a4a">C</span><svg style="left:1736px;top:948.8px" width="12" height="15" viewBox="0 0 12 15" ><path d="M6,0.5 L10,5 H7.2 V10 H10 L6,14.5 L2,10 H4.8 V5 H2z" fill="#333"/></svg><svg style="left:1757.5px;top:945.2px" width="22" height="22" viewBox="0 0 22 22" ><path d="M11,1 L14.8,5.5 H12.2 V9.8 H16.5 V7.2 L21,11 L16.5,14.8 V12.2 H12.2 V16.5 H14.8 L11,21 L7.2,16.5 H9.8 V12.2 H5.5 V14.8 L1,11 L5.5,7.2 V9.8 H9.8 V5.5 H7.2z" fill="#333"/></svg><svg style="left:1786px;top:947px" width="18" height="18" viewBox="0 0 18 18" ><circle cx="9" cy="9" r="7" fill="none" stroke="#4a4a4a" stroke-width="1.6"/><path d="M5,9 H13" stroke="#333" stroke-width="2.2"/></svg><svg style="left:1812.5px;top:947px" width="18" height="18" viewBox="0 0 18 18" ><circle cx="9" cy="9" r="7" fill="none" stroke="#4a4a4a" stroke-width="1.6"/><path d="M5,9 H13 M9,5 V13" stroke="#333" stroke-width="2.2"/></svg><div class="a" style="left:1847px;top:947.5px;width:17px;height:17px;background:#e5e5e5"></div><div class="a" style="left:1873px;top:947.5px;width:17px;height:17px;background:#e5e5e5"></div><svg style="left:1849px;top:950px" width="12" height="13" viewBox="0 0 12 13" ><path d="M9.5,1 L2,6.5 L9.5,12z" fill="#c4c4c4"/></svg><svg style="left:1876px;top:950px" width="12" height="13" viewBox="0 0 12 13" ><path d="M2.5,1 L10,6.5 L2.5,12z" fill="#b0b0b0"/></svg><svg style="left:1898px;top:948px" width="17" height="16" viewBox="0 0 17 16" ><rect x="1" y="1.5" width="15" height="13" fill="#f4f4f4" stroke="#444" stroke-width="1.4"/><path d="M1,4.5 H16" stroke="#444" stroke-width="1.6"/><path d="M3.5,7.5 h1.5 M6.5,7.5 h7.5 M3.5,10 h1.5 M6.5,10 h7.5 M3.5,12.5 h1.5 M6.5,12.5 h7.5" stroke="#555" stroke-width="1.1"/></svg><div id="bottombar" class="a"></div><div class="grip" style="left:0px;top:975px;height:36px;width:6px"></div><div class="a" style="left:2px;top:992px;width:2.5px;height:3px;background:#555"></div><div class="combo" style="left:11px;top:981px;width:161px;height:25px;border-color:#b0b0b0;border-radius:2px"></div><div class="a" style="left:30px;top:993px;width:101px;height:1.6px;background:#333"></div><svg style="left:155px;top:989px" width="12" height="8" viewBox="0 0 12 8" ><path d="M1,1 L6,6 L11,1" fill="none" stroke="#555" stroke-width="1.3"/></svg><div class="a" style="left:175.5px;top:980px;width:1px;height:27px;background:#999"></div><div class="combo" style="left:180.5px;top:981px;width:124px;height:25px;border-color:#b0b0b0;border-radius:2px"></div><div class="a" style="left:195px;top:993px;width:74px;height:1.6px;background:#333"></div><svg style="left:288px;top:989px" width="12" height="8" viewBox="0 0 12 8" ><path d="M1,1 L6,6 L11,1" fill="none" stroke="#555" stroke-width="1.3"/></svg><div class="sep" style="left:313px;top:975px;height:36px;background:#c4c4c4"></div><div class="grip" style="left:321px;top:975px;height:36px;width:8px"></div><div class="a" style="left:324px;top:992px;width:3px;height:3px;background:#555"></div><div class="a" style="left:335px;top:981px;width:11.5px;height:11px;background:#e6e6fa;box-shadow:0 0 0 0.8px rgba(90,90,90,0.55)"></div><div class="a" style="left:350px;top:981px;width:11.5px;height:11px;background:#ffd200;box-shadow:0 0 0 0.8px rgba(90,90,90,0.55)"></div><div class="a" style="left:365px;top:981px;width:11.5px;height:11px;background:#ffff00;box-shadow:0 0 0 0.8px rgba(90,90,90,0.55)"></div><div class="a" style="left:380px;top:981px;width:11.5px;height:11px;background:#696969;box-shadow:0 0 0 0.8px rgba(90,90,90,0.55)"></div><div class="a" style="left:395px;top:981px;width:11.5px;height:11px;background:#32cd32;box-shadow:0 0 0 0.8px rgba(90,90,90,0.55)"></div><div class="a" style="left:410px;top:981px;width:11.5px;height:11px;background:#ffffe0;box-shadow:0 0 0 0.8px rgba(90,90,90,0.55)"></div><div class="a" style="left:425px;top:981px;width:11.5px;height:11px;background:#ff6a1e;box-shadow:0 0 0 0.8px rgba(90,90,90,0.55)"></div><div class="a" style="left:439px;top:981px;width:11.5px;height:11px;background:#98fb98;box-shadow:0 0 0 0.8px rgba(90,90,90,0.55)"></div><div class="a" style="left:335px;top:996px;width:11.5px;height:11px;background:#8b0000;box-shadow:0 0 0 0.8px rgba(90,90,90,0.55)"></div><div class="a" style="left:350px;top:996px;width:11.5px;height:11px;background:#6a8494;box-shadow:0 0 0 0.8px rgba(90,90,90,0.55)"></div><div class="a" style="left:365px;top:996px;width:11.5px;height:11px;background:#0000ff;box-shadow:0 0 0 0.8px rgba(90,90,90,0.55)"></div><div class="a" style="left:380px;top:996px;width:11.5px;height:11px;background:#009400;box-shadow:0 0 0 0.8px rgba(90,90,90,0.55)"></div><div class="a" style="left:395px;top:996px;width:11.5px;height:11px;background:#ff0000;box-shadow:0 0 0 0.8px rgba(90,90,90,0.55)"></div><div class="a" style="left:410px;top:996px;width:11.5px;height:11px;background:#000000;box-shadow:0 0 0 0.8px rgba(90,90,90,0.55)"></div><div class="a" style="left:425px;top:996px;width:11.5px;height:11px;background:#3a82aa;box-shadow:0 0 0 0.8px rgba(90,90,90,0.55)"></div><div class="a" style="left:439px;top:996px;width:11.5px;height:11px;background:#90d2e6;box-shadow:0 0 0 0.8px rgba(90,90,90,0.55)"></div><div class="a" style="left:394px;top:995px;width:13.5px;height:13px;box-sizing:border-box;border:1px dotted #fff"></div><svg style="left:454.5px;top:992px" width="8" height="5" viewBox="0 0 8 5" ><path d="M0,0 H7 L3.5,4.5z" fill="#111"/></svg><div class="sep" style="left:474px;top:975px;height:36px;background:#c4c4c4"></div><div class="grip" style="left:483px;top:975px;height:36px;width:8px"></div><div class="a" style="left:485.5px;top:992px;width:3px;height:3px;background:#555"></div><div class="a" style="left:492px;top:975px;width:1px;height:36px;background:#9a9a9a"></div><svg style="left:499px;top:987px" width="21" height="17" viewBox="0 0 21 17" ><rect x="0.6" y="0.8" width="19.5" height="15.2" rx="1" fill="#fbfbfb" stroke="#9ab0c8" stroke-width="1.1"/><path d="M1,2.4 H19.8" stroke="#b4c8e0" stroke-width="1.6"/><path d="M2.5,11.5 L6.5,7.5 L9,9.5" stroke="#d02020" stroke-width="1.3" fill="none"/><text x="10" y="14" font-size="12.5" fill="#333" font-family="Liberation Serif, serif">1</text></svg><svg style="left:533px;top:987px" width="21" height="17" viewBox="0 0 21 17" ><rect x="0.6" y="0.8" width="19.5" height="15.2" rx="1" fill="#fbfbfb" stroke="#9ab0c8" stroke-width="1.1"/><path d="M1,2.4 H19.8" stroke="#b4c8e0" stroke-width="1.6"/><path d="M2.5,11.5 L6.5,7.5 L9,9.5" stroke="#d02020" stroke-width="1.3" fill="none"/><text x="10" y="14" font-size="12.5" fill="#333" font-family="Liberation Serif, serif">2</text></svg><svg style="left:566.7px;top:987px" width="21" height="17" viewBox="0 0 21 17" ><rect x="0.6" y="0.8" width="19.5" height="15.2" rx="1" fill="#fbfbfb" stroke="#9ab0c8" stroke-width="1.1"/><path d="M1,2.4 H19.8" stroke="#b4c8e0" stroke-width="1.6"/><path d="M2.5,11.5 L6.5,7.5 L9,9.5" stroke="#d02020" stroke-width="1.3" fill="none"/><text x="10" y="14" font-size="12.5" fill="#333" font-family="Liberation Serif, serif">3</text></svg><svg style="left:600.5px;top:987px" width="21" height="17" viewBox="0 0 21 17" ><rect x="0.6" y="0.8" width="19.5" height="15.2" rx="1" fill="#fbfbfb" stroke="#9ab0c8" stroke-width="1.1"/><path d="M1,2.4 H19.8" stroke="#b4c8e0" stroke-width="1.6"/><path d="M2.5,11.5 L6.5,7.5 L9,9.5" stroke="#d02020" stroke-width="1.3" fill="none"/><text x="10" y="14" font-size="12.5" fill="#333" font-family="Liberation Serif, serif">4</text></svg><svg style="left:634px;top:987px" width="21" height="17" viewBox="0 0 21 17" ><rect x="0.6" y="0.8" width="19.5" height="15.2" rx="1" fill="#fbfbfb" stroke="#9ab0c8" stroke-width="1.1"/><path d="M1,2.4 H19.8" stroke="#b4c8e0" stroke-width="1.6"/><path d="M2.5,11.5 L6.5,7.5 L9,9.5" stroke="#d02020" stroke-width="1.3" fill="none"/><text x="10" y="14" font-size="12.5" fill="#333" font-family="Liberation Serif, serif">5</text></svg><svg style="left:668px;top:987px" width="21" height="17" viewBox="0 0 21 17" ><rect x="0.6" y="0.8" width="19.5" height="15.2" rx="1" fill="#fbfbfb" stroke="#9ab0c8" stroke-width="1.1"/><path d="M1,2.4 H19.8" stroke="#b4c8e0" stroke-width="1.6"/><path d="M2.5,11.5 L6.5,7.5 L9,9.5" stroke="#d02020" stroke-width="1.3" fill="none"/><text x="10" y="14" font-size="12.5" fill="#333" font-family="Liberation Serif, serif">6</text></svg><div class="sep" style="left:703px;top:975px;height:36px;background:#c4c4c4"></div><div class="a" style="left:0;top:1012.3px;width:1920px;height:8px;background:#464646"></div><div id="taskbar" class="a"></div><div class="a" style="left:1840px;top:1016.5px;width:25px;height:3.5px;background:#f0f0f0"></div><div class="a" style="left:1869px;top:1016.5px;width:26px;height:3.5px;background:#e0e4ea"></div><svg style="left:27px;top:1036.5px" width="28" height="28" viewBox="0 0 28 28" ><defs><linearGradient id="sun" x1="0.2" y1="0" x2="0.8" y2="1"><stop offset="0" stop-color="#ffd400"/><stop offset="0.5" stop-color="#f8a000"/><stop offset="1" stop-color="#e05a00"/></linearGradient></defs><circle cx="14" cy="14" r="12.6" fill="url(#sun)"/></svg><svg style="left:506px;top:1036px" width="29" height="29" viewBox="0 0 29 29" ><defs><linearGradient id="wn" x1="0" y1="0" x2="1" y2="1"><stop offset="0" stop-color="#6fd4ff"/><stop offset="1" stop-color="#0a94ea"/></linearGradient></defs><rect x="0" y="0" width="13.7" height="13.7" rx="1" fill="url(#wn)"/><rect x="15.3" y="0" width="13.7" height="13.7" rx="1" fill="url(#wn)"/><rect x="0" y="15.3" width="13.7" height="13.7" rx="1" fill="url(#wn)"/><rect x="15.3" y="15.3" width="13.7" height="13.7" rx="1" fill="url(#wn)"/></svg><svg style="left:561px;top:1035px" width="30" height="30" viewBox="0 0 30 30" ><circle cx="16.5" cy="13" r="10.2" fill="#3a3840" stroke="#f2f2f2" stroke-width="2.6"/><path d="M9.5,21 L3,28" stroke="#e4e4e4" stroke-width="3.6" stroke-linecap="round"/></svg><svg style="left:615px;top:1035px" width="31" height="31" viewBox="0 0 31 31" ><defs><linearGradient id="ch" x1="0" y1="0" x2="1" y2="1"><stop offset="0" stop-color="#8a7ae8"/><stop offset="1" stop-color="#5a52c8"/></linearGradient></defs><circle cx="15.5" cy="15" r="14" fill="url(#ch)"/><path d="M3,22 L2,29.5 L10,27z" fill="#6a5ed4"/><rect x="7.5" y="10" width="11" height="10" rx="2.2" fill="#fff"/><path d="M19,14 L24,11 V19.5 L19,16.5z" fill="#fff"/></svg><svg style="left:671px;top:1036px" width="29" height="28" viewBox="0 0 29 28" ><rect x="11" y="3" width="17" height="22" rx="1" fill="#fff" stroke="#2a5aa8" stroke-width="1.2"/><path d="M18,7 h8 M18,10 h8 M18,13 h8 M18,16 h8 M18,19 h8 M18,22 h8" stroke="#2a5aa8" stroke-width="1.5"/><path d="M0,3 L17,0 V28 L0,25z" fill="#2a5caa"/><text x="8.5" y="19.5" font-size="13" font-weight="bold" fill="#fff" text-anchor="middle" font-family="Liberation Sans, sans-serif">W</text></svg><svg style="left:726px;top:1035.5px" width="29" height="29" viewBox="0 0 29 29" ><defs><linearGradient id="mg726" x1="0" y1="0" x2="0" y2="1"><stop offset="0" stop-color="#3a3a3a"/><stop offset="0.5" stop-color="#000"/></linearGradient></defs><rect width="29" height="29" rx="2.5" fill="url(#mg726)"/><path d="M8,27 L9.5,16.5 H12.5 L11.5,27z M13,27 L15.5,9 H18.7 L16.5,27z M18.2,27 L21.5,2 H25 L21.8,27z" fill="#f08222"/></svg><svg style="left:781px;top:1036px" width="31" height="28" viewBox="0 0 31 28" ><path d="M0.5,4 Q0.5,1.5 3,1.5 H10 L13.5,5 H28 Q30.5,5 30.5,7.5 V10 H0.5z" fill="#e8a820"/><rect x="0.5" y="6.5" width="30" height="21" rx="2" fill="#fcd04e"/><path d="M0.5,17 H30.5 V25.5 Q30.5,27.5 28.5,27.5 H2.5 Q0.5,27.5 0.5,25.5z" fill="#f8c030"/><rect x="6" y="19.5" width="19" height="8" rx="1.5" fill="#1a86d8"/><rect x="9.5" y="22" width="12" height="2" rx="1" fill="#0a5aa0"/></svg><svg style="left:836px;top:1036px" width="29" height="29" viewBox="0 0 29 29" ><circle cx="14.5" cy="14.5" r="13.5" fill="#fff"/><path d="M14.5,14.5 L2.8,7.75 A13.5,13.5 0 0 1 26.2,7.75z" fill="#e8412f"/><path d="M14.5,14.5 L26.2,7.75 A13.5,13.5 0 0 1 14.5,28z" fill="#fbc116"/><path d="M14.5,14.5 L14.5,28 A13.5,13.5 0 0 1 2.8,7.75z" fill="#2ca24c"/><circle cx="14.5" cy="14.5" r="6.3" fill="#fff"/><circle cx="14.5" cy="14.5" r="5" fill="#4a88f0"/></svg><div class="a" style="left:852px;top:1029.5px;width:19px;height:19px;border-radius:50%;background:#f07c14"></div><span class="t" style="left:857px;top:1033.5px;font-size:11.5px;font-weight:bold;color:#fff">N</span><svg style="left:892px;top:1036px" width="29" height="28" viewBox="0 0 29 28" ><rect x="11" y="3" width="17" height="22" rx="1" fill="#fff" stroke="#c8401e" stroke-width="1.2"/><circle cx="21.5" cy="10.5" r="4" fill="none" stroke="#d04a24" stroke-width="1.6"/><path d="M18,18 h8 M18,21.5 h8" stroke="#d04a24" stroke-width="1.5"/><path d="M0,3 L17,0 V28 L0,25z" fill="#d2441e"/><text x="8.5" y="19.5" font-size="13" font-weight="bold" fill="#fff" text-anchor="middle" font-family="Liberation Sans, sans-serif">P</text></svg><svg style="left:947px;top:1035px" width="28" height="30" viewBox="0 0 28 30" ><path d="M11.5,1.5 Q14,0 16.5,1.5 L23.5,23 H4.5z" fill="#f88a0c"/><path d="M9.3,8.5 H18.7 L20.3,13.5 H7.7z M6.4,17.5 H21.6 L22.8,21.5 H5.2z" fill="#f4f4f4"/><path d="M2.5,22 H25.5 L27.5,28.5 H0.5z" fill="#f88a0c"/></svg><svg style="left:1001px;top:1035.5px" width="30" height="30" viewBox="0 0 30 30" ><defs><linearGradient id="ed" x1="0" y1="0" x2="1" y2="1"><stop offset="0" stop-color="#2aa8e8"/><stop offset="1" stop-color="#1560c0"/></linearGradient><linearGradient id="ed2" x1="0" y1="0" x2="1" y2="0"><stop offset="0" stop-color="#38c4e0"/><stop offset="1" stop-color="#6cd84a"/></linearGradient></defs><circle cx="15" cy="15" r="14" fill="url(#ed)"/><path d="M2,11 Q6,1 16,1 Q28,2 29,14 Q28,19 22,19 Q18,19 18.5,16 Q19,12 14,11 Q8,10.5 5,16 Q2.5,14 2,11z" fill="url(#ed2)"/><path d="M8,17 Q9,26 20,27 Q12,29.5 6,23 Q4.5,20 5,16z" fill="#0e4a9a"/></svg><svg style="left:1057px;top:1036px" width="29" height="28" viewBox="0 0 29 28" ><rect x="11" y="3" width="17" height="22" rx="1" fill="#fff" stroke="#3a56a8" stroke-width="1.2"/><rect x="19" y="6" width="6" height="5" fill="none" stroke="#3a56a8" stroke-width="1.4"/><path d="M22,12 l3.5,3.5 l-3.5,3.5 l-3.5,-3.5z" fill="none" stroke="#3a56a8" stroke-width="1.4"/><path d="M0,3 L17,0 V28 L0,25z" fill="#3a56a8"/><text x="8.5" y="19.5" font-size="13" font-weight="bold" fill="#fff" text-anchor="middle" font-family="Liberation Sans, sans-serif">V</text></svg><svg style="left:1111.5px;top:1036px" width="29" height="28" viewBox="0 0 29 28" ><rect x="11" y="3" width="17" height="22" rx="1" fill="#fff" stroke="#1e7044" stroke-width="1.2"/><path d="M18,7 h8 M18,10.5 h8 M18,14 h8 M18,17.5 h8 M18,21 h8 M22,5 v19" stroke="#1e7044" stroke-width="1.4"/><path d="M0,3 L17,0 V28 L0,25z" fill="#1e7044"/><text x="8.5" y="19.5" font-size="13" font-weight="bold" fill="#fff" text-anchor="middle" font-family="Liberation Sans, sans-serif">X</text></svg><svg style="left:1166px;top:1036px" width="29" height="29" viewBox="0 0 29 29" ><circle cx="14.5" cy="14.5" r="13.5" fill="#fff"/><path d="M14.5,14.5 L2.8,7.75 A13.5,13.5 0 0 1 26.2,7.75z" fill="#e8412f"/><path d="M14.5,14.5 L26.2,7.75 A13.5,13.5 0 0 1 14.5,28z" fill="#fbc116"/><path d="M14.5,14.5 L14.5,28 A13.5,13.5 0 0 1 2.8,7.75z" fill="#2ca24c"/><circle cx="14.5" cy="14.5" r="6.3" fill="#fff"/><circle cx="14.5" cy="14.5" r="5" fill="#4a88f0"/></svg><svg style="left:1224px;top:1035px" width="24" height="30" viewBox="0 0 24 30" ><rect x="0.5" y="0.5" width="23" height="29" rx="2.5" fill="#6a7480" stroke="#8a94a0" stroke-width="1"/><rect x="3" y="3" width="18" height="5.5" fill="#4cc2f0"/><g fill="#dfe5ea"><rect x="3" y="11" width="5" height="4.6"/><rect x="9.5" y="11" width="5" height="4.6"/><rect x="16" y="11" width="5" height="4.6"/><rect x="3" y="17" width="5" height="4.6"/><rect x="9.5" y="17" width="5" height="4.6"/><rect x="3" y="23" width="5" height="4.6"/><rect x="9.5" y="23" width="5" height="4.6"/></g><rect x="16" y="17" width="5" height="10.6" fill="#1a5a9a"/></svg><svg style="left:1276px;top:1035px" width="30" height="30" viewBox="0 0 30 30" ><rect width="30" height="30" fill="#0e8a88"/><path d="M14,3 h2 v2 h2 v2 h-2 v2.5 h-2 V7 h-2 V5 h2z" fill="#111"/><path d="M15,9 Q21,8 24.5,11 Q27,15 22.5,20 H7.5 Q3,15 5.5,11 Q9,8 15,9z" fill="#fff" stroke="#111" stroke-width="1"/><path d="M7.5,20 H22.5 V26 H7.5z" fill="#fff" stroke="#111" stroke-width="1"/><path d="M7.5,23 H22.5" stroke="#111" stroke-width="0.7"/></svg><div class="a" style="left:1321px;top:1025px;width:50px;height:50px;border-radius:5px;background:#2f2c37;box-sizing:border-box;border:1px solid #3a3842"></div><svg style="left:1331.5px;top:1035.5px" width="29" height="29" viewBox="0 0 29 29" ><defs><linearGradient id="mg1331" x1="0" y1="0" x2="0" y2="1"><stop offset="0" stop-color="#3a3a3a"/><stop offset="0.5" stop-color="#000"/></linearGradient></defs><rect width="29" height="29" rx="2.5" fill="url(#mg1331)"/><path d="M8,27 L9.5,16.5 H12.5 L11.5,27z M13,27 L15.5,9 H18.7 L16.5,27z M18.2,27 L21.5,2 H25 L21.8,27z" fill="#f08222"/></svg><div class="a" style="left:1336px;top:1070.5px;width:20px;height:3.5px;border-radius:2px;background:#4cc2ff"></div><svg style="left:1386px;top:1035.5px" width="30" height="30" viewBox="0 0 30 30" ><rect x="1" y="1" width="28" height="28" rx="5" fill="#201c24" stroke="#a0182e" stroke-width="1.6"/><text x="15" y="23" font-size="14" fill="#b01a34" text-anchor="middle" font-family="Liberation Sans, sans-serif">Pro</text><path d="M19,6 l3.5,1.5 l-3.5,1.5z M6,10 h3" stroke="#b01a34" stroke-width="1.2" fill="#b01a34"/></svg><div class="a" style="left:681.5px;top:1070.5px;width:8px;height:3.5px;border-radius:2px;background:#9a9a9e"></div><div class="a" style="left:847px;top:1070.5px;width:8px;height:3.5px;border-radius:2px;background:#9a9a9e"></div><div class="a" style="left:1122px;top:1070.5px;width:8px;height:3.5px;border-radius:2px;background:#9a9a9e"></div><div class="a" style="left:1232px;top:1070.5px;width:8px;height:3.5px;border-radius:2px;background:#9a9a9e"></div><div class="a" style="left:1397px;top:1070.5px;width:8px;height:3.5px;border-radius:2px;background:#9a9a9e"></div><svg style="left:1626px;top:1044px" width="18" height="12" viewBox="0 0 18 12" ><path d="M1.5,10 L9,2 L16.5,10" fill="none" stroke="#f4f4f4" stroke-width="1.5"/></svg><svg style="left:1654px;top:1041px" width="22" height="20" viewBox="0 0 22 20" ><path d="M4.5,13 Q0.5,13 1,9.5 Q1.5,6.5 5,7 Q6,2 11,2.5 Q15,3 15.5,6.5 Q19,7 18.5,10.5 Q18,13 15,13z" fill="#dcdcdc"/><path d="M4.5,13 Q0.5,13 1,9.5 Q1.5,6.5 5,7 L13,13z" fill="#a8a8a8"/><circle cx="15.5" cy="14" r="5.2" fill="#d81e28"/><path d="M13.3,11.8 l4.4,4.4 M17.7,11.8 l-4.4,4.4" stroke="#fff" stroke-width="1.4"/></svg><svg style="left:1689px;top:1041px" width="22" height="18" viewBox="0 0 22 18" ><path d="M1.5,6.5 Q11,-2.5 20.5,6.5" fill="none" stroke="#f4f4f4" stroke-width="1.7"/><path d="M4.8,9.8 Q11,4 17.2,9.8" fill="none" stroke="#f4f4f4" stroke-width="1.7"/><path d="M8,13 Q11,10.2 14,13" fill="none" stroke="#f4f4f4" stroke-width="1.7"/><circle cx="11" cy="15.6" r="1.5" fill="#f4f4f4"/></svg><svg style="left:1719px;top:1040px" width="22" height="20" viewBox="0 0 22 20" ><path d="M1.5,7 H5 L9.5,2.5 V17.5 L5,13 H1.5z" fill="none" stroke="#f4f4f4" stroke-width="1.5" stroke-linejoin="round"/><path d="M12,7 Q14,10 12,13 M14.5,4.8 Q18,10 14.5,15.2 M17,2.6 Q22,10 17,17.4" fill="none" stroke="#f4f4f4" stroke-width="1.4"/></svg><svg style="left:1749px;top:1041px" width="23" height="18" viewBox="0 0 23 18" ><rect x="6" y="3.5" width="13.5" height="11" rx="2" fill="none" stroke="#f4f4f4" stroke-width="1.6"/><rect x="20" y="6.5" width="2" height="5" rx="1" fill="#f4f4f4"/><rect x="7.5" y="5.2" width="4" height="7.6" fill="#f4f4f4"/><path d="M2.5,1 v3 M5,1 v3 M1.5,4 h4.5 v3 q0,1.5 -2.2,1.5 q-2.3,0 -2.3,-1.5z M3.7,8.5 V13.5 H7" fill="none" stroke="#f4f4f4" stroke-width="1.3"/></svg><span class="t" style="left:65.5px;top:1033.3px;font-size:15px;color:#fff;transform:scaleX(0.9250);">29°C</span><span class="t" style="left:65.5px;top:1053.3px;font-size:15px;color:#d6d6d6;transform:scaleX(0.9225);">Sol</span><span class="t" style="left:1835.3px;top:1031.9px;font-size:15px;color:#fff;transform:scaleX(0.8206);">16:18</span><span class="t" style="left:1789.7px;top:1052.0px;font-size:15px;color:#fff;transform:scaleX(1.0191);">22/09/2022</span><div class="a" style="left:1875.5px;top:1040px;width:21px;height:21px;border-radius:50%;background:#4cc2ff"></div><span class="t" style="left:1882.5px;top:1043.6px;font-size:14px;color:#10202c;">1</span>
</body></html>
